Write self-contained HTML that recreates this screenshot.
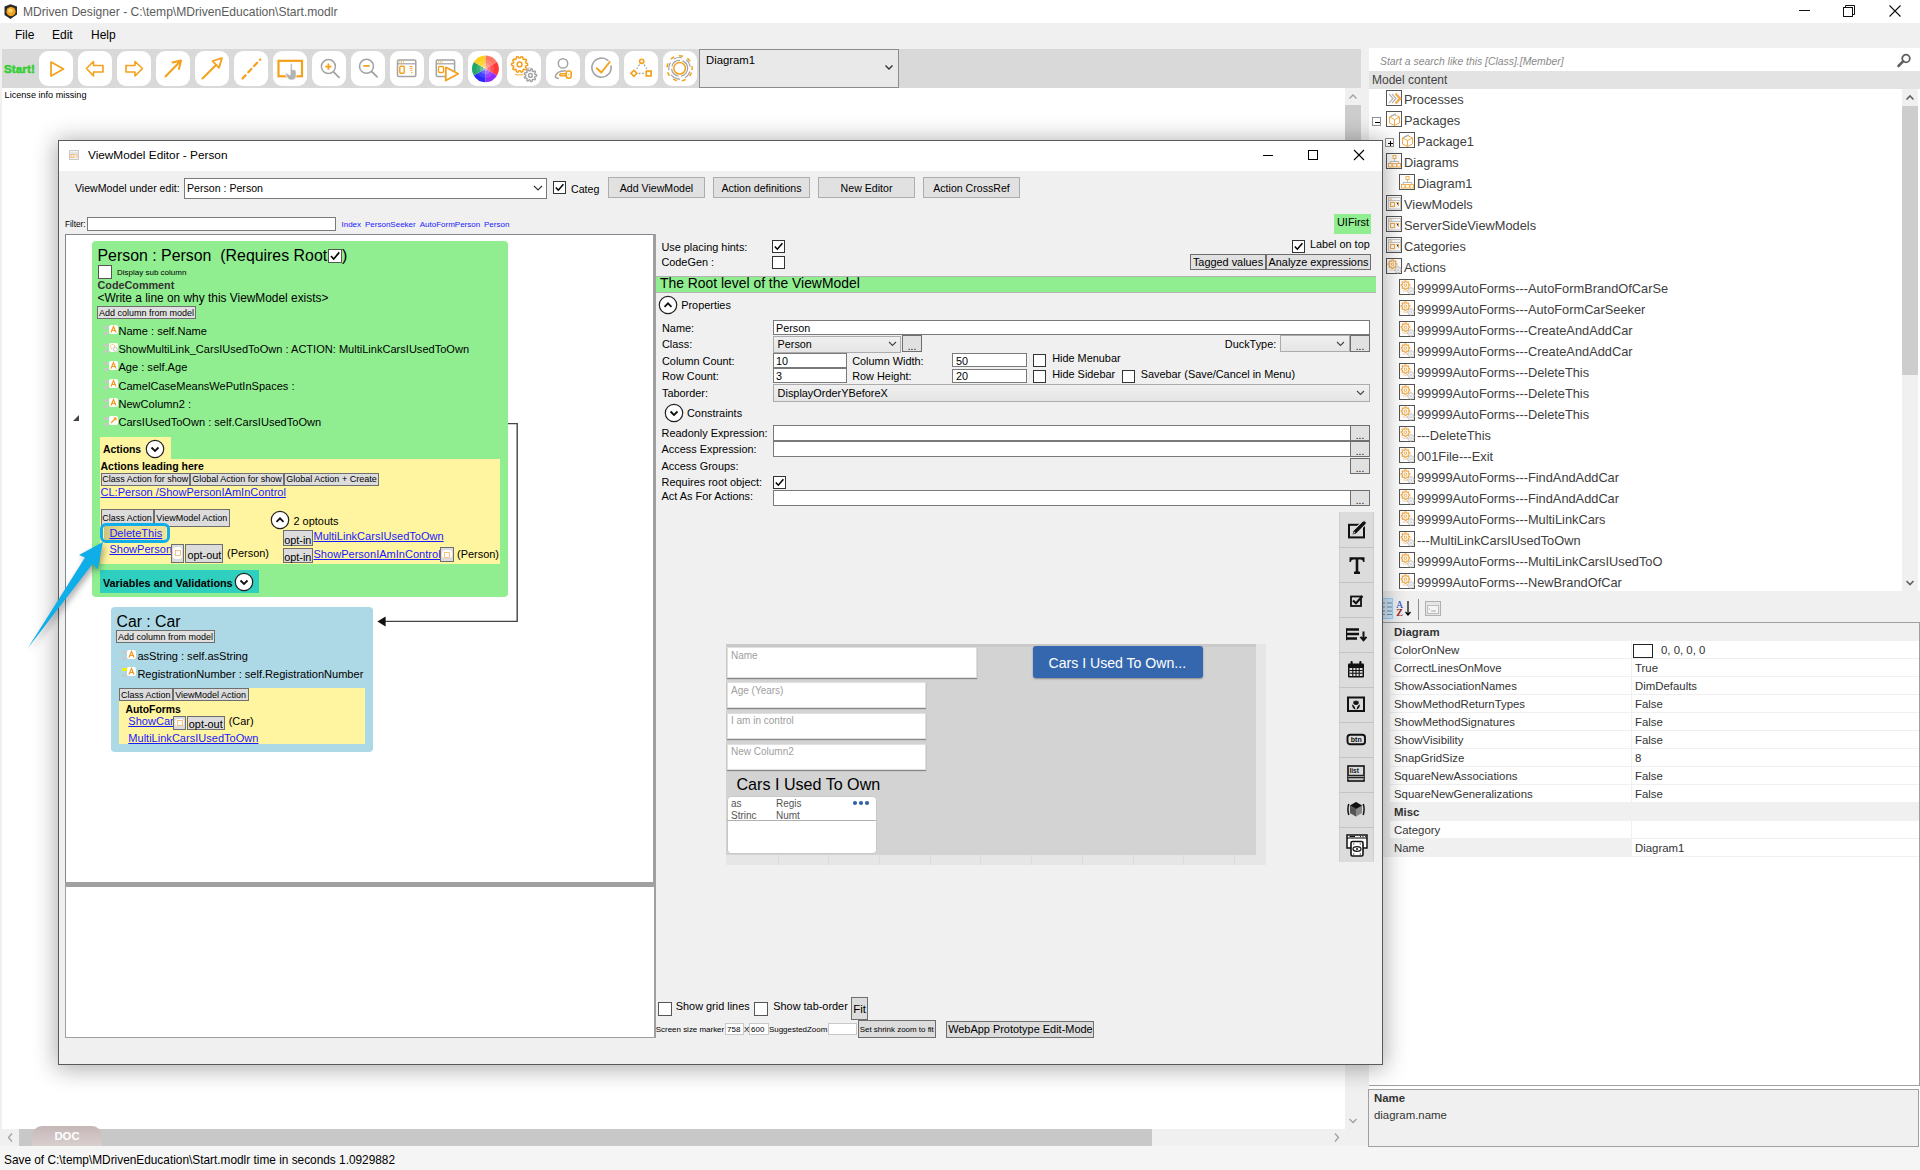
<!DOCTYPE html>
<html><head><meta charset="utf-8">
<style>
*{box-sizing:border-box;margin:0;padding:0}
html,body{width:1920px;height:1170px;overflow:hidden;background:#fff;font-family:"Liberation Sans",sans-serif;color:#000}
.a{position:absolute;white-space:nowrap}
.t11{font-size:11px}
.lnk{color:#0000ee;text-decoration:underline}
.btn{position:absolute;background:#e1e1e1;border:1px solid #adadad;font-size:11px;text-align:center}
.cb{position:absolute;width:13px;height:13px;border:1px solid #333;background:#fff}
.tb{position:absolute;top:51px;width:34px;height:35px;background:#fff;border-radius:9px}
.tb svg{position:absolute;left:0;top:0}
.ti{position:absolute;font-size:12.8px;color:#404040;white-space:nowrap}
.ico{position:absolute;width:17px;height:17px;border:1px solid #6e6e6e;background:#fff}
</style></head><body>
<!-- title bar -->
<div class="a" style="left:0;top:0;width:1920px;height:23px;background:#fff"></div>
<div class="a" style="left:23px;top:5px;font-size:12.1px;color:#5c5c5c">MDriven Designer - C:\temp\MDrivenEducation\Start.modlr</div>
<!-- app icon -->
<svg class="a" style="left:2px;top:3px" width="17" height="17"><path d="M2.5,3.5 L8.5,1.2 L15,3.5 L15,11.5 L8.5,16 L2.5,12 Z" fill="#2b2b2b"/><circle cx="9" cy="8.6" r="4.6" fill="#f4a21c"/><circle cx="8.4" cy="7.6" r="2.2" fill="#ffd36b"/></svg>
<!-- window controls -->
<div class="a" style="left:1799px;top:10px;width:11px;height:1px;background:#111"></div>
<svg class="a" style="left:1842px;top:4px" width="14" height="14"><path d="M3.5,3.5 V1.5 H12.5 V10.5 H10.5" fill="none" stroke="#111" stroke-width="1"/><rect x="1.5" y="3.5" width="9" height="9" fill="#fff" stroke="#111" stroke-width="1"/></svg>
<svg class="a" style="left:1888px;top:4px" width="14" height="14"><path d="M1.5,1.5 L12.5,12.5 M12.5,1.5 L1.5,12.5" stroke="#111" stroke-width="1.1"/></svg>
<!-- menu -->
<div class="a" style="left:0;top:23px;width:1920px;height:26px;background:#f0f0f0"></div>
<div class="a" style="left:15px;top:28px;font-size:12px">File</div>
<div class="a" style="left:52px;top:28px;font-size:12px">Edit</div>
<div class="a" style="left:91px;top:28px;font-size:12px">Help</div>
<!-- toolbar -->
<div class="a" style="left:0;top:49px;width:2px;height:1097px;background:#f0f0f0"></div>
<div class="a" style="left:2px;top:49px;width:1359px;height:39px;background:#d9d9d9"></div>
<div class="a" style="left:1361px;top:49px;width:8px;height:1098px;background:#f0f0f0"></div>
<div class="a" style="left:4px;top:62.5px;font-size:11.6px;line-height:11.6px;font-weight:bold;letter-spacing:0.1px;-webkit-text-stroke:0.6px #34cf34;color:#34cf34">Start!</div>
<div class="tb" style="left:39px"><svg width="34" height="35" viewBox="0 0 34 35"><polygon points="12,11 24.5,18 12,25" fill="none" stroke="#f5a01a" stroke-width="1.7" stroke-linejoin="round"/></svg></div>
<div class="tb" style="left:78px"><svg width="34" height="35" viewBox="0 0 34 35"><path d="M8.5,17.5 L15.5,10.5 V14.5 H25 V21 H15.5 V25 Z" fill="none" stroke="#f5a01a" stroke-width="1.6" stroke-linejoin="round"/></svg></div>
<div class="tb" style="left:117px"><svg width="34" height="35" viewBox="0 0 34 35"><path d="M25.5,17.5 L18,10.5 V14.5 H9 V21 H18 V25 Z" fill="none" stroke="#f5a01a" stroke-width="1.6" stroke-linejoin="round"/></svg></div>
<div class="tb" style="left:156px"><svg width="34" height="35" viewBox="0 0 34 35"><path d="M9.5,25.5 L25,9.5 M16.5,11.5 L25,9.5 L23,18" fill="none" stroke="#f5a01a" stroke-width="2" stroke-linecap="round" stroke-linejoin="round"/></svg></div>
<div class="tb" style="left:195px"><svg width="34" height="35" viewBox="0 0 34 35"><path d="M7.5,27.5 L21,14" fill="none" stroke="#f5a01a" stroke-width="2" stroke-linecap="round"/><path d="M27,7 L17.5,10 L24,16.8 Z" fill="none" stroke="#f5a01a" stroke-width="1.8" stroke-linejoin="round"/></svg></div>
<div class="tb" style="left:234px"><svg width="34" height="35" viewBox="0 0 34 35"><path d="M8.5,27.5 L26.2,8.5" fill="none" stroke="#f5a01a" stroke-width="2.2" stroke-linecap="round" stroke-dasharray="4.5,4"/></svg></div>
<div class="tb" style="left:273px"><svg width="34" height="35" viewBox="0 0 34 35"><rect x="5.5" y="9.8" width="23.5" height="15.5" fill="none" stroke="#f5a01a" stroke-width="2.2"/><path d="M17.2,13 q1,-1.6 2,0 v5.5 l2.5,0.3 q1.5,0.5 1.5,2 v3.5 q0,4.5 -4,4.8 h-1.5 q-2.2,-0.2 -3.2,-2.2 l-2.2,-3.8 q-0.3,-1.2 1,-1 l3.9,2 z" fill="#b3b3b3" stroke="#fff" stroke-width="0.8"/></svg></div>
<div class="tb" style="left:312px"><svg width="34" height="35" viewBox="0 0 34 35"><circle cx="16.4" cy="15.6" r="7" fill="none" stroke="#a3a3a3" stroke-width="1.5"/><path d="M21.5,20.8 L27,26.3" stroke="#a3a3a3" stroke-width="1.8" stroke-linecap="round"/><path d="M13.3,15.6 H19.5 M16.4,12.5 V18.7" stroke="#f5a01a" stroke-width="1.8"/></svg></div>
<div class="tb" style="left:351px"><svg width="34" height="35" viewBox="0 0 34 35"><circle cx="15.5" cy="15.3" r="7" fill="none" stroke="#a3a3a3" stroke-width="1.5"/><path d="M20.6,20.5 L26.2,25.8" stroke="#a3a3a3" stroke-width="1.8" stroke-linecap="round"/><path d="M12.4,14.9 H18.6" stroke="#f5a01a" stroke-width="1.8"/></svg></div>
<div class="tb" style="left:390px"><svg width="34" height="35" viewBox="0 0 34 35"><rect x="7.5" y="9" width="18.3" height="16.4" rx="1.2" fill="none" stroke="#a3a3a3" stroke-width="1.5"/><path d="M7.5,12.8 H25.8" stroke="#a3a3a3" stroke-width="1.2"/><circle cx="9.8" cy="10.9" r=".6" fill="#f5a01a"/><circle cx="11.6" cy="10.9" r=".6" fill="#f5a01a"/><circle cx="13.4" cy="10.9" r=".6" fill="#f5a01a"/><rect x="9.8" y="15.3" width="4.4" height="7" rx="1" fill="none" stroke="#f5a01a" stroke-width="1.4"/><path d="M19.5,15.5 H22.5 M19.5,17.3 H22.5 M20.5,19.3 H22.5 M21,21.6 H22.5" stroke="#f5a01a" stroke-width="1"/></svg></div>
<div class="tb" style="left:429px"><svg width="34" height="35" viewBox="0 0 34 35"><rect x="7.3" y="9" width="18.3" height="16.4" rx="1.2" fill="none" stroke="#a3a3a3" stroke-width="1.5"/><path d="M7.3,12.8 H25.6" stroke="#a3a3a3" stroke-width="1.2"/><circle cx="9.6" cy="10.9" r=".6" fill="#f5a01a"/><circle cx="11.4" cy="10.9" r=".6" fill="#f5a01a"/><circle cx="13.2" cy="10.9" r=".6" fill="#f5a01a"/><rect x="9.5" y="15.5" width="5" height="6" rx="1" fill="none" stroke="#f5a01a" stroke-width="1.3"/><path d="M16.8,16.3 L29.2,22.8 L16.8,29.5 Z" fill="#fff" stroke="#f5a01a" stroke-width="1.8" stroke-linejoin="round"/></svg></div>
<div class="tb" style="left:468px"><svg width="34" height="35" viewBox="0 0 34 35"><path d="M17.4,17.8 L17.40,4.40 A13.4,13.4 0 0 1 29.00,11.10 Z" fill="#ff7564"/><path d="M17.4,17.8 L29.00,11.10 A13.4,13.4 0 0 1 29.00,24.50 Z" fill="#ff3a3a"/><path d="M17.4,17.8 L29.00,24.50 A13.4,13.4 0 0 1 17.40,31.20 Z" fill="#8f2bff"/><path d="M17.4,17.8 L17.40,31.20 A13.4,13.4 0 0 1 5.80,24.50 Z" fill="#2a2aff"/><path d="M17.4,17.8 L5.80,24.50 A13.4,13.4 0 0 1 5.80,11.10 Z" fill="#1fa86a"/><path d="M17.4,17.8 L5.80,11.10 A13.4,13.4 0 0 1 17.40,4.40 Z" fill="#ffcf1f"/><circle cx="17.4" cy="17.8" r="9" fill="#fff" opacity=".12"/><circle cx="17.4" cy="17.8" r="5.5" fill="#fff" opacity=".2"/><circle cx="17.4" cy="17.8" r="2.5" fill="#fff" opacity=".25"/></svg></div>
<div class="tb" style="left:507px"><svg width="34" height="35" viewBox="0 0 34 35"><path d="M20.60,13.40 L20.59,13.71 L20.58,14.03 L20.42,14.33 L19.71,14.53 L19.00,14.67 L18.82,14.89 L18.76,15.14 L18.69,15.38 L18.60,15.62 L18.51,15.85 L18.53,16.13 L19.02,16.67 L19.47,17.25 L19.42,17.58 L19.25,17.84 L19.07,18.10 L18.88,18.35 L18.68,18.60 L18.38,18.74 L17.69,18.49 L17.03,18.19 L16.76,18.27 L16.56,18.43 L16.36,18.58 L16.16,18.72 L15.94,18.86 L15.79,19.09 L15.87,19.82 L15.90,20.55 L15.66,20.79 L15.37,20.91 L15.07,21.01 L14.77,21.10 L14.47,21.18 L14.14,21.12 L13.73,20.51 L13.37,19.88 L13.10,19.78 L12.85,19.80 L12.60,19.80 L12.35,19.80 L12.10,19.78 L11.83,19.88 L11.47,20.51 L11.06,21.12 L10.73,21.18 L10.43,21.10 L10.13,21.01 L9.83,20.91 L9.54,20.79 L9.30,20.55 L9.33,19.82 L9.41,19.09 L9.26,18.86 L9.04,18.72 L8.84,18.58 L8.64,18.43 L8.44,18.27 L8.17,18.19 L7.51,18.49 L6.82,18.74 L6.52,18.60 L6.32,18.35 L6.13,18.10 L5.95,17.84 L5.78,17.58 L5.73,17.25 L6.18,16.67 L6.67,16.13 L6.69,15.85 L6.60,15.62 L6.51,15.38 L6.44,15.14 L6.38,14.89 L6.20,14.67 L5.49,14.53 L4.78,14.33 L4.62,14.03 L4.61,13.71 L4.60,13.40 L4.61,13.09 L4.62,12.77 L4.78,12.47 L5.49,12.27 L6.20,12.13 L6.38,11.91 L6.44,11.66 L6.51,11.42 L6.60,11.18 L6.69,10.95 L6.67,10.67 L6.18,10.13 L5.73,9.55 L5.78,9.22 L5.95,8.96 L6.13,8.70 L6.32,8.45 L6.52,8.20 L6.82,8.06 L7.51,8.31 L8.17,8.61 L8.44,8.53 L8.64,8.37 L8.84,8.22 L9.04,8.08 L9.26,7.94 L9.41,7.71 L9.33,6.98 L9.30,6.25 L9.54,6.01 L9.83,5.89 L10.13,5.79 L10.43,5.70 L10.73,5.62 L11.06,5.68 L11.47,6.29 L11.83,6.92 L12.10,7.02 L12.35,7.00 L12.60,7.00 L12.85,7.00 L13.10,7.02 L13.37,6.92 L13.73,6.29 L14.14,5.68 L14.47,5.62 L14.77,5.70 L15.07,5.79 L15.37,5.89 L15.66,6.01 L15.90,6.25 L15.87,6.98 L15.79,7.71 L15.94,7.94 L16.16,8.08 L16.36,8.22 L16.56,8.37 L16.76,8.53 L17.03,8.61 L17.69,8.31 L18.38,8.06 L18.68,8.20 L18.88,8.45 L19.07,8.70 L19.25,8.96 L19.42,9.22 L19.47,9.55 L19.02,10.13 L18.53,10.67 L18.51,10.95 L18.60,11.18 L18.69,11.42 L18.76,11.66 L18.82,11.91 L19.00,12.13 L19.71,12.27 L20.42,12.47 L20.58,12.77 L20.59,13.09 L20.60,13.40Z" fill="none" stroke="#f5a01a" stroke-width="1.5" stroke-linejoin="round"/><circle cx="12.6" cy="13.4" r="2.40" fill="none" stroke="#f5a01a" stroke-width="1.5"/><path d="M8.2,23.4 q4,1.2 8,0" fill="none" stroke="#f5a01a" stroke-width="1.1" opacity=".75"/><path d="M20,17.5 q3,-1.3 6,.5" fill="none" stroke="#a3a3a3" stroke-width="0.9" opacity=".7"/><path d="M29.60,24.40 L29.60,24.64 L29.58,24.89 L29.56,25.13 L29.01,25.29 L28.36,25.39 L27.87,25.47 L27.83,25.65 L27.77,25.82 L27.72,25.99 L27.65,26.16 L27.58,26.33 L27.50,26.49 L27.93,26.94 L28.35,27.44 L28.56,27.84 L28.42,28.04 L28.27,28.24 L28.11,28.43 L27.95,28.61 L27.78,28.78 L27.57,28.91 L27.00,28.61 L26.45,28.27 L26.10,28.12 L25.96,28.22 L25.80,28.32 L25.65,28.41 L25.49,28.50 L25.33,28.58 L25.21,28.77 L25.25,29.40 L25.24,30.05 L25.08,30.37 L24.85,30.43 L24.61,30.48 L24.37,30.52 L24.13,30.56 L23.89,30.58 L23.64,30.40 L23.40,29.80 L23.21,29.19 L23.04,28.99 L22.86,28.97 L22.68,28.94 L22.50,28.91 L22.33,28.87 L22.15,28.83 L21.90,29.02 L21.51,29.53 L21.08,30.01 L20.80,30.03 L20.59,29.92 L20.37,29.81 L20.16,29.69 L19.96,29.56 L19.76,29.42 L19.76,29.02 L19.98,28.40 L20.23,27.82 L20.15,27.65 L20.02,27.52 L19.90,27.39 L19.79,27.25 L19.68,27.10 L19.58,26.96 L19.15,27.01 L18.51,27.14 L17.88,27.21 L17.77,27.00 L17.67,26.77 L17.58,26.55 L17.50,26.32 L17.43,26.08 L17.37,25.85 L17.77,25.52 L18.34,25.20 L18.83,24.94 L18.81,24.76 L18.80,24.58 L18.80,24.40 L18.80,24.22 L18.81,24.04 L18.83,23.86 L18.34,23.60 L17.77,23.28 L17.37,22.95 L17.43,22.72 L17.50,22.48 L17.58,22.25 L17.67,22.03 L17.77,21.80 L17.88,21.59 L18.51,21.66 L19.15,21.79 L19.58,21.84 L19.68,21.70 L19.79,21.55 L19.90,21.41 L20.02,21.28 L20.15,21.15 L20.23,20.98 L19.98,20.40 L19.76,19.78 L19.76,19.38 L19.96,19.24 L20.16,19.11 L20.37,18.99 L20.59,18.88 L20.80,18.77 L21.08,18.79 L21.51,19.27 L21.90,19.78 L22.15,19.97 L22.33,19.93 L22.50,19.89 L22.68,19.86 L22.86,19.83 L23.04,19.81 L23.21,19.61 L23.40,19.00 L23.64,18.40 L23.89,18.22 L24.13,18.24 L24.37,18.28 L24.61,18.32 L24.85,18.37 L25.08,18.43 L25.24,18.75 L25.25,19.40 L25.21,20.03 L25.33,20.22 L25.49,20.30 L25.65,20.39 L25.80,20.48 L25.96,20.58 L26.10,20.68 L26.45,20.53 L27.00,20.19 L27.57,19.89 L27.78,20.02 L27.95,20.19 L28.11,20.37 L28.27,20.56 L28.42,20.76 L28.56,20.96 L28.35,21.36 L27.93,21.86 L27.50,22.31 L27.58,22.47 L27.65,22.64 L27.72,22.81 L27.77,22.98 L27.83,23.15 L27.87,23.33 L28.36,23.41 L29.01,23.51 L29.56,23.67 L29.58,23.91 L29.60,24.16 L29.60,24.40Z" fill="none" stroke="#a3a3a3" stroke-width="1.4" stroke-linejoin="round"/><circle cx="23.4" cy="24.4" r="1.86" fill="none" stroke="#a3a3a3" stroke-width="1.4"/></svg></div>
<div class="tb" style="left:546px"><svg width="34" height="35" viewBox="0 0 34 35"><circle cx="17" cy="12.4" r="4.7" fill="none" stroke="#a3a3a3" stroke-width="1.5"/><path d="M19.5,19.8 Q10.5,20 9.3,25.5 Q9.3,27.2 12.3,27.2" fill="none" stroke="#a3a3a3" stroke-width="1.5" stroke-linecap="round"/><path d="M20.5,22.8 H14.5 Q12.8,23.8 14.5,24.8 H20.5" fill="none" stroke="#f5a01a" stroke-width="1.5" stroke-linecap="round"/><rect x="20.2" y="20" width="5" height="7.3" rx="2.2" fill="none" stroke="#f5a01a" stroke-width="1.6"/><circle cx="22.8" cy="23.6" r=".7" fill="#f5a01a"/></svg></div>
<div class="tb" style="left:585px"><svg width="34" height="35" viewBox="0 0 34 35"><path d="M23,9.5 A9.6,9.6 0 1 0 26,15" fill="none" stroke="#a3a3a3" stroke-width="1.6" stroke-linecap="round"/><path d="M11.7,17.2 L16.4,21.5 L24.7,11" fill="none" stroke="#f5a01a" stroke-width="1.9" stroke-linecap="round" stroke-linejoin="round"/></svg></div>
<div class="tb" style="left:624px"><svg width="34" height="35" viewBox="0 0 34 35"><circle cx="17.7" cy="10.3" r="2.1" fill="none" stroke="#f5a01a" stroke-width="1.6"/><rect x="7.8" y="20.2" width="4.2" height="4.2" transform="rotate(45 9.9 22.3)" fill="none" stroke="#f5a01a" stroke-width="1.6"/><rect x="22.3" y="20.1" width="4.8" height="4.8" fill="none" stroke="#f5a01a" stroke-width="1.7"/><path d="M15.5,13.5 L12.7,17.8 M20,13.5 L22.8,17.8 M14.5,22.4 H19.8" stroke="#a3a3a3" stroke-width="1.3" stroke-dasharray="2,1.6"/></svg></div>
<div class="tb" style="left:663px"><svg width="34" height="35" viewBox="0 0 34 35"><circle cx="16.6" cy="17.3" r="5.8" fill="none" stroke="#f5a01a" stroke-width="1.5"/><circle cx="16.6" cy="17.3" r="8" fill="none" stroke="#a3a3a3" stroke-width="1.2" stroke-dasharray="11,2.5"/><circle cx="16.6" cy="17.3" r="10.8" fill="none" stroke="#a3a3a3" stroke-width="1.2" stroke-dasharray="8,5" transform="rotate(100 16.6 17.3)"/><circle cx="16.6" cy="17.3" r="12.6" fill="none" stroke="#f5a01a" stroke-width="1.5" stroke-dasharray="4,5" transform="rotate(20 16.6 17.3)"/></svg></div>

<div class="a" style="left:699px;top:49px;width:200px;height:39px;background:#e9e9e9;border:1px solid #8c8c8c"></div>
<div class="a" style="left:706px;top:55px;font-size:11.3px;line-height:11.3px">Diagram1</div>
<svg class="a" style="left:884px;top:64px" width="10" height="7"><path d="M1.5,1.5 L5,5 L8.5,1.5" fill="none" stroke="#333" stroke-width="1.4"/></svg>


<!-- main white area -->
<div class="a" style="left:4.6px;top:91px;font-size:9.1px;line-height:9.2px">License info missing</div>
<!-- vertical scrollbar main -->
<div class="a" style="left:1345px;top:88px;width:16px;height:1041px;background:#f0f0f0"></div>
<div class="a" style="left:1345px;top:105px;width:16px;height:940px;background:#cdcdcd"></div>
<!-- horizontal scrollbar -->
<div class="a" style="left:2px;top:1129px;width:1359px;height:17px;background:#f0f0f0"></div>
<div class="a" style="left:19px;top:1129px;width:1133px;height:17px;background:#c8c8c8"></div>
<div class="a" style="left:32px;top:1126px;width:70px;height:20px;border-radius:10px 10px 0 0;background:linear-gradient(#c6b7b7,#d9cfcf);color:#fff;font-weight:bold;font-size:11.3px;text-align:center;line-height:21px">DOC</div>
<!-- status -->
<div class="a" style="left:0;top:1146px;width:1920px;height:24px;background:#f5f5f5"></div>
<div class="a" style="left:4px;top:1153px;font-size:11.85px">Save of C:\temp\MDrivenEducation\Start.modlr time in seconds 1.0929882</div>
<!-- right panel -->
<div class="a" style="left:1369px;top:48px;width:551px;height:23px;background:#fff"></div>
<div class="a" style="left:1380px;top:55.5px;font-size:10.4px;font-style:italic;color:#8a8a8a">Start a search like this [Class].[Member]</div>
<div class="a" style="left:1369px;top:71px;width:551px;height:18px;background:#e3e3e3"></div>
<div class="a" style="left:1372px;top:73px;font-size:12px;color:#444">Model content</div>
<!-- main scroll arrows -->
<svg class="a" style="left:1345px;top:88px" width="16" height="17"><path d="M4.5,10.5 L8,7 L11.5,10.5" fill="none" stroke="#a0a0a0" stroke-width="1.3"/></svg>
<svg class="a" style="left:1345px;top:1112px" width="16" height="17"><path d="M4.5,7 L8,10.5 L11.5,7" fill="none" stroke="#a0a0a0" stroke-width="1.3"/></svg>
<svg class="a" style="left:2px;top:1129px" width="17" height="17"><path d="M10,4.5 L6.5,8.5 L10,12.5" fill="none" stroke="#a0a0a0" stroke-width="1.3"/></svg>
<svg class="a" style="left:1328px;top:1129px" width="17" height="17"><path d="M7,4.5 L10.5,8.5 L7,12.5" fill="none" stroke="#a0a0a0" stroke-width="1.3"/></svg>
<div class="a" style="left:1369px;top:89px;width:533px;height:502px;background:#fff;overflow:hidden">
<div class="ico" style="left:17px;top:1px;width:16px;height:16px;border-color:#555"><svg width="15" height="15" viewBox="0 0 15 15" style="position:absolute;left:0;top:0"><path d="M2,3 L6,7.5 L2,12 M5,3 L9,7.5 L5,12" fill="none" stroke="#b5b5b5" stroke-width="1.2"/><path d="M8.5,2.5 L13,7.5 L8.5,12.5" fill="none" stroke="#f3ac4a" stroke-width="2.4"/></svg></div><div class="ti" style="left:35px;top:3px">Processes</div>
<div class="ico" style="left:17px;top:22px;width:16px;height:16px;border-color:#555"><svg width="15" height="15" viewBox="0 0 15 15" style="position:absolute;left:0;top:0"><path d="M2.5,5 L7.5,2.5 L12.5,5 V11 L7.5,13.5 L2.5,11 Z M2.5,5 L7.5,7.5 L12.5,5 M7.5,7.5 V13.5" fill="none" stroke="#f3ac4a" stroke-width="1"/><path d="M4,4.2 L9,1.9" stroke="#b5b5b5" stroke-width="1.5"/></svg></div><div class="ti" style="left:35px;top:24px">Packages</div><div style="position:absolute;left:3px;top:28px;width:9px;height:9px;border:1px solid #919191;background:#fff"><div style="position:absolute;left:2px;top:3.5px;width:5px;height:1px;background:#000"></div></div>
<div class="ico" style="left:30px;top:43px;width:16px;height:16px;border-color:#555"><svg width="15" height="15" viewBox="0 0 15 15" style="position:absolute;left:0;top:0"><path d="M2.5,5 L7.5,2.5 L12.5,5 V11 L7.5,13.5 L2.5,11 Z M2.5,5 L7.5,7.5 L12.5,5 M7.5,7.5 V13.5" fill="none" stroke="#f3ac4a" stroke-width="1"/><path d="M4,4.2 L9,1.9" stroke="#b5b5b5" stroke-width="1.5"/></svg></div><div class="ti" style="left:48px;top:45px">Package1</div><div style="position:absolute;left:16px;top:49px;width:9px;height:9px;border:1px solid #919191;background:#fff"><div style="position:absolute;left:2px;top:3.5px;width:5px;height:1px;background:#000"></div><div style="position:absolute;left:4px;top:1.5px;width:1px;height:5px;background:#000"></div></div>
<div class="ico" style="left:17px;top:64px;width:16px;height:16px;border-color:#555"><svg width="15" height="15" viewBox="0 0 15 15" style="position:absolute;left:0;top:0"><rect x="6" y="1.5" width="3" height="3" fill="none" stroke="#f3ac4a" stroke-width=".9"/><path d="M7.5,4.5 V7 M3.2,9.5 V7.5 H11.8 V9.5" fill="none" stroke="#b5b5b5" stroke-width=".9"/><rect x="1.5" y="9.5" width="3.5" height="3.5" fill="none" stroke="#f3ac4a" stroke-width=".9"/><rect x="5.8" y="9.5" width="3.5" height="3.5" fill="none" stroke="#f3ac4a" stroke-width=".9"/><rect x="10" y="9.5" width="3.5" height="3.5" fill="none" stroke="#f3ac4a" stroke-width=".9"/></svg></div><div class="ti" style="left:35px;top:66px">Diagrams</div>
<div class="ico" style="left:30px;top:85px;width:16px;height:16px;border-color:#555"><svg width="15" height="15" viewBox="0 0 15 15" style="position:absolute;left:0;top:0"><rect x="6" y="1.5" width="3" height="3" fill="none" stroke="#f3ac4a" stroke-width=".9"/><path d="M7.5,4.5 V7 M3.2,9.5 V7.5 H11.8 V9.5" fill="none" stroke="#b5b5b5" stroke-width=".9"/><rect x="1.5" y="9.5" width="3.5" height="3.5" fill="none" stroke="#f3ac4a" stroke-width=".9"/><rect x="5.8" y="9.5" width="3.5" height="3.5" fill="none" stroke="#f3ac4a" stroke-width=".9"/><rect x="10" y="9.5" width="3.5" height="3.5" fill="none" stroke="#f3ac4a" stroke-width=".9"/></svg></div><div class="ti" style="left:48px;top:87px">Diagram1</div>
<div class="ico" style="left:17px;top:106px;width:16px;height:16px;border-color:#555"><svg width="15" height="15" viewBox="0 0 15 15" style="position:absolute;left:0;top:0"><rect x="1.5" y="1.5" width="12" height="11.5" fill="none" stroke="#ccc" stroke-width="1"/><path d="M1.5,4.5 H13.5" stroke="#ccc"/><rect x="3.5" y="6.5" width="4" height="4" fill="none" stroke="#f3ac4a" stroke-width="1.1"/><path d="M9.5,6.5 H11.5 V10" stroke="#f3ac4a" stroke-width="1"/><path d="M2.5,3 H5" stroke="#f3ac4a" stroke-width=".8"/></svg></div><div class="ti" style="left:35px;top:108px">ViewModels</div>
<div class="ico" style="left:17px;top:127px;width:16px;height:16px;border-color:#555"><svg width="15" height="15" viewBox="0 0 15 15" style="position:absolute;left:0;top:0"><rect x="1.5" y="1.5" width="12" height="11.5" fill="none" stroke="#ccc" stroke-width="1"/><path d="M1.5,4.5 H13.5" stroke="#ccc"/><rect x="3.5" y="6.5" width="4" height="4" fill="none" stroke="#f3ac4a" stroke-width="1.1"/><path d="M9.5,6.5 H11.5 V10" stroke="#f3ac4a" stroke-width="1"/><path d="M2.5,3 H5" stroke="#f3ac4a" stroke-width=".8"/></svg></div><div class="ti" style="left:35px;top:129px">ServerSideViewModels</div>
<div class="ico" style="left:17px;top:148px;width:16px;height:16px;border-color:#555"><svg width="15" height="15" viewBox="0 0 15 15" style="position:absolute;left:0;top:0"><rect x="1.5" y="1.5" width="12" height="11.5" fill="none" stroke="#ccc" stroke-width="1"/><path d="M1.5,4.5 H13.5" stroke="#ccc"/><rect x="3.5" y="6.5" width="4" height="4" fill="none" stroke="#f3ac4a" stroke-width="1.1"/><path d="M9.5,6.5 H11.5 V10" stroke="#f3ac4a" stroke-width="1"/><path d="M2.5,3 H5" stroke="#f3ac4a" stroke-width=".8"/></svg></div><div class="ti" style="left:35px;top:150px">Categories</div>
<div class="ico" style="left:17px;top:169px;width:16px;height:16px;border-color:#555"><svg width="15" height="15" viewBox="0 0 15 15" style="position:absolute;left:0;top:0"><path d="M9.80,5.20 L9.79,5.43 L9.78,5.65 L9.57,5.85 L9.04,5.95 L8.59,6.03 L8.54,6.19 L8.49,6.35 L8.42,6.50 L8.35,6.65 L8.27,6.80 L8.54,7.17 L8.84,7.62 L8.84,7.91 L8.70,8.08 L8.54,8.24 L8.38,8.40 L8.21,8.54 L7.92,8.54 L7.47,8.24 L7.10,7.97 L6.95,8.05 L6.80,8.12 L6.65,8.19 L6.49,8.24 L6.33,8.29 L6.25,8.74 L6.15,9.27 L5.95,9.48 L5.73,9.49 L5.50,9.50 L5.27,9.49 L5.05,9.48 L4.85,9.27 L4.75,8.74 L4.67,8.29 L4.51,8.24 L4.35,8.19 L4.20,8.12 L4.05,8.05 L3.90,7.97 L3.53,8.24 L3.08,8.54 L2.79,8.54 L2.62,8.40 L2.46,8.24 L2.30,8.08 L2.16,7.91 L2.16,7.62 L2.46,7.17 L2.73,6.80 L2.65,6.65 L2.58,6.50 L2.51,6.35 L2.46,6.19 L2.41,6.03 L1.96,5.95 L1.43,5.85 L1.22,5.65 L1.21,5.43 L1.20,5.20 L1.21,4.97 L1.22,4.75 L1.43,4.55 L1.96,4.45 L2.41,4.37 L2.46,4.21 L2.51,4.05 L2.58,3.90 L2.65,3.75 L2.73,3.60 L2.46,3.23 L2.16,2.78 L2.16,2.49 L2.30,2.32 L2.46,2.16 L2.62,2.00 L2.79,1.86 L3.08,1.86 L3.53,2.16 L3.90,2.43 L4.05,2.35 L4.20,2.28 L4.35,2.21 L4.51,2.16 L4.67,2.11 L4.75,1.66 L4.85,1.13 L5.05,0.92 L5.27,0.91 L5.50,0.90 L5.73,0.91 L5.95,0.92 L6.15,1.13 L6.25,1.66 L6.33,2.11 L6.49,2.16 L6.65,2.21 L6.80,2.28 L6.95,2.35 L7.10,2.43 L7.47,2.16 L7.92,1.86 L8.21,1.86 L8.38,2.00 L8.54,2.16 L8.70,2.32 L8.84,2.49 L8.84,2.78 L8.54,3.23 L8.27,3.60 L8.35,3.75 L8.42,3.90 L8.49,4.05 L8.54,4.21 L8.59,4.37 L9.04,4.45 L9.57,4.55 L9.78,4.75 L9.79,4.97 L9.80,5.20Z" fill="none" stroke="#f3ac4a" stroke-width="1.1"/><circle cx="5.5" cy="5.2" r="1.3" fill="none" stroke="#f3ac4a" stroke-width="1"/><path d="M2.8,10.8 q2.7,.9 5.4,0" stroke="#f3ac4a" stroke-width=".8" fill="none" opacity=".7"/><path d="M14.20,10.80 L14.20,10.98 L14.18,11.16 L14.02,11.31 L13.58,11.39 L13.21,11.45 L13.18,11.57 L13.13,11.70 L13.08,11.82 L13.03,11.93 L12.97,12.05 L13.19,12.35 L13.43,12.71 L13.44,12.94 L13.33,13.08 L13.20,13.20 L13.08,13.33 L12.94,13.44 L12.71,13.43 L12.35,13.19 L12.05,12.97 L11.93,13.03 L11.82,13.08 L11.70,13.13 L11.57,13.18 L11.45,13.21 L11.39,13.58 L11.31,14.02 L11.16,14.18 L10.98,14.20 L10.80,14.20 L10.62,14.20 L10.44,14.18 L10.29,14.02 L10.21,13.58 L10.15,13.21 L10.03,13.18 L9.90,13.13 L9.78,13.08 L9.67,13.03 L9.55,12.97 L9.25,13.19 L8.89,13.43 L8.66,13.44 L8.52,13.33 L8.40,13.20 L8.27,13.08 L8.16,12.94 L8.17,12.71 L8.41,12.35 L8.63,12.05 L8.57,11.93 L8.52,11.82 L8.47,11.70 L8.42,11.57 L8.39,11.45 L8.02,11.39 L7.58,11.31 L7.42,11.16 L7.40,10.98 L7.40,10.80 L7.40,10.62 L7.42,10.44 L7.58,10.29 L8.02,10.21 L8.39,10.15 L8.42,10.03 L8.47,9.90 L8.52,9.78 L8.57,9.67 L8.63,9.55 L8.41,9.25 L8.17,8.89 L8.16,8.66 L8.27,8.52 L8.40,8.40 L8.52,8.27 L8.66,8.16 L8.89,8.17 L9.25,8.41 L9.55,8.63 L9.67,8.57 L9.78,8.52 L9.90,8.47 L10.03,8.42 L10.15,8.39 L10.21,8.02 L10.29,7.58 L10.44,7.42 L10.62,7.40 L10.80,7.40 L10.98,7.40 L11.16,7.42 L11.31,7.58 L11.39,8.02 L11.45,8.39 L11.57,8.42 L11.70,8.47 L11.82,8.52 L11.93,8.57 L12.05,8.63 L12.35,8.41 L12.71,8.17 L12.94,8.16 L13.08,8.27 L13.20,8.40 L13.33,8.52 L13.44,8.66 L13.43,8.89 L13.19,9.25 L12.97,9.55 L13.03,9.67 L13.08,9.78 L13.13,9.90 L13.18,10.03 L13.21,10.15 L13.58,10.21 L14.02,10.29 L14.18,10.44 L14.20,10.62 L14.20,10.80Z" fill="none" stroke="#c4c4c4" stroke-width="1"/><circle cx="10.8" cy="10.8" r="1" fill="none" stroke="#c4c4c4" stroke-width=".8"/></svg></div><div class="ti" style="left:35px;top:171px">Actions</div>
<div class="ico" style="left:30px;top:190px;width:16px;height:16px;border-color:#555"><svg width="15" height="15" viewBox="0 0 15 15" style="position:absolute;left:0;top:0"><path d="M9.80,5.20 L9.79,5.43 L9.78,5.65 L9.57,5.85 L9.04,5.95 L8.59,6.03 L8.54,6.19 L8.49,6.35 L8.42,6.50 L8.35,6.65 L8.27,6.80 L8.54,7.17 L8.84,7.62 L8.84,7.91 L8.70,8.08 L8.54,8.24 L8.38,8.40 L8.21,8.54 L7.92,8.54 L7.47,8.24 L7.10,7.97 L6.95,8.05 L6.80,8.12 L6.65,8.19 L6.49,8.24 L6.33,8.29 L6.25,8.74 L6.15,9.27 L5.95,9.48 L5.73,9.49 L5.50,9.50 L5.27,9.49 L5.05,9.48 L4.85,9.27 L4.75,8.74 L4.67,8.29 L4.51,8.24 L4.35,8.19 L4.20,8.12 L4.05,8.05 L3.90,7.97 L3.53,8.24 L3.08,8.54 L2.79,8.54 L2.62,8.40 L2.46,8.24 L2.30,8.08 L2.16,7.91 L2.16,7.62 L2.46,7.17 L2.73,6.80 L2.65,6.65 L2.58,6.50 L2.51,6.35 L2.46,6.19 L2.41,6.03 L1.96,5.95 L1.43,5.85 L1.22,5.65 L1.21,5.43 L1.20,5.20 L1.21,4.97 L1.22,4.75 L1.43,4.55 L1.96,4.45 L2.41,4.37 L2.46,4.21 L2.51,4.05 L2.58,3.90 L2.65,3.75 L2.73,3.60 L2.46,3.23 L2.16,2.78 L2.16,2.49 L2.30,2.32 L2.46,2.16 L2.62,2.00 L2.79,1.86 L3.08,1.86 L3.53,2.16 L3.90,2.43 L4.05,2.35 L4.20,2.28 L4.35,2.21 L4.51,2.16 L4.67,2.11 L4.75,1.66 L4.85,1.13 L5.05,0.92 L5.27,0.91 L5.50,0.90 L5.73,0.91 L5.95,0.92 L6.15,1.13 L6.25,1.66 L6.33,2.11 L6.49,2.16 L6.65,2.21 L6.80,2.28 L6.95,2.35 L7.10,2.43 L7.47,2.16 L7.92,1.86 L8.21,1.86 L8.38,2.00 L8.54,2.16 L8.70,2.32 L8.84,2.49 L8.84,2.78 L8.54,3.23 L8.27,3.60 L8.35,3.75 L8.42,3.90 L8.49,4.05 L8.54,4.21 L8.59,4.37 L9.04,4.45 L9.57,4.55 L9.78,4.75 L9.79,4.97 L9.80,5.20Z" fill="none" stroke="#f3ac4a" stroke-width="1.1"/><circle cx="5.5" cy="5.2" r="1.3" fill="none" stroke="#f3ac4a" stroke-width="1"/><path d="M2.8,10.8 q2.7,.9 5.4,0" stroke="#f3ac4a" stroke-width=".8" fill="none" opacity=".7"/><path d="M14.20,10.80 L14.20,10.98 L14.18,11.16 L14.02,11.31 L13.58,11.39 L13.21,11.45 L13.18,11.57 L13.13,11.70 L13.08,11.82 L13.03,11.93 L12.97,12.05 L13.19,12.35 L13.43,12.71 L13.44,12.94 L13.33,13.08 L13.20,13.20 L13.08,13.33 L12.94,13.44 L12.71,13.43 L12.35,13.19 L12.05,12.97 L11.93,13.03 L11.82,13.08 L11.70,13.13 L11.57,13.18 L11.45,13.21 L11.39,13.58 L11.31,14.02 L11.16,14.18 L10.98,14.20 L10.80,14.20 L10.62,14.20 L10.44,14.18 L10.29,14.02 L10.21,13.58 L10.15,13.21 L10.03,13.18 L9.90,13.13 L9.78,13.08 L9.67,13.03 L9.55,12.97 L9.25,13.19 L8.89,13.43 L8.66,13.44 L8.52,13.33 L8.40,13.20 L8.27,13.08 L8.16,12.94 L8.17,12.71 L8.41,12.35 L8.63,12.05 L8.57,11.93 L8.52,11.82 L8.47,11.70 L8.42,11.57 L8.39,11.45 L8.02,11.39 L7.58,11.31 L7.42,11.16 L7.40,10.98 L7.40,10.80 L7.40,10.62 L7.42,10.44 L7.58,10.29 L8.02,10.21 L8.39,10.15 L8.42,10.03 L8.47,9.90 L8.52,9.78 L8.57,9.67 L8.63,9.55 L8.41,9.25 L8.17,8.89 L8.16,8.66 L8.27,8.52 L8.40,8.40 L8.52,8.27 L8.66,8.16 L8.89,8.17 L9.25,8.41 L9.55,8.63 L9.67,8.57 L9.78,8.52 L9.90,8.47 L10.03,8.42 L10.15,8.39 L10.21,8.02 L10.29,7.58 L10.44,7.42 L10.62,7.40 L10.80,7.40 L10.98,7.40 L11.16,7.42 L11.31,7.58 L11.39,8.02 L11.45,8.39 L11.57,8.42 L11.70,8.47 L11.82,8.52 L11.93,8.57 L12.05,8.63 L12.35,8.41 L12.71,8.17 L12.94,8.16 L13.08,8.27 L13.20,8.40 L13.33,8.52 L13.44,8.66 L13.43,8.89 L13.19,9.25 L12.97,9.55 L13.03,9.67 L13.08,9.78 L13.13,9.90 L13.18,10.03 L13.21,10.15 L13.58,10.21 L14.02,10.29 L14.18,10.44 L14.20,10.62 L14.20,10.80Z" fill="none" stroke="#c4c4c4" stroke-width="1"/><circle cx="10.8" cy="10.8" r="1" fill="none" stroke="#c4c4c4" stroke-width=".8"/></svg></div><div class="ti" style="left:48px;top:192px">99999AutoForms---AutoFormBrandOfCarSe</div>
<div class="ico" style="left:30px;top:211px;width:16px;height:16px;border-color:#555"><svg width="15" height="15" viewBox="0 0 15 15" style="position:absolute;left:0;top:0"><path d="M9.80,5.20 L9.79,5.43 L9.78,5.65 L9.57,5.85 L9.04,5.95 L8.59,6.03 L8.54,6.19 L8.49,6.35 L8.42,6.50 L8.35,6.65 L8.27,6.80 L8.54,7.17 L8.84,7.62 L8.84,7.91 L8.70,8.08 L8.54,8.24 L8.38,8.40 L8.21,8.54 L7.92,8.54 L7.47,8.24 L7.10,7.97 L6.95,8.05 L6.80,8.12 L6.65,8.19 L6.49,8.24 L6.33,8.29 L6.25,8.74 L6.15,9.27 L5.95,9.48 L5.73,9.49 L5.50,9.50 L5.27,9.49 L5.05,9.48 L4.85,9.27 L4.75,8.74 L4.67,8.29 L4.51,8.24 L4.35,8.19 L4.20,8.12 L4.05,8.05 L3.90,7.97 L3.53,8.24 L3.08,8.54 L2.79,8.54 L2.62,8.40 L2.46,8.24 L2.30,8.08 L2.16,7.91 L2.16,7.62 L2.46,7.17 L2.73,6.80 L2.65,6.65 L2.58,6.50 L2.51,6.35 L2.46,6.19 L2.41,6.03 L1.96,5.95 L1.43,5.85 L1.22,5.65 L1.21,5.43 L1.20,5.20 L1.21,4.97 L1.22,4.75 L1.43,4.55 L1.96,4.45 L2.41,4.37 L2.46,4.21 L2.51,4.05 L2.58,3.90 L2.65,3.75 L2.73,3.60 L2.46,3.23 L2.16,2.78 L2.16,2.49 L2.30,2.32 L2.46,2.16 L2.62,2.00 L2.79,1.86 L3.08,1.86 L3.53,2.16 L3.90,2.43 L4.05,2.35 L4.20,2.28 L4.35,2.21 L4.51,2.16 L4.67,2.11 L4.75,1.66 L4.85,1.13 L5.05,0.92 L5.27,0.91 L5.50,0.90 L5.73,0.91 L5.95,0.92 L6.15,1.13 L6.25,1.66 L6.33,2.11 L6.49,2.16 L6.65,2.21 L6.80,2.28 L6.95,2.35 L7.10,2.43 L7.47,2.16 L7.92,1.86 L8.21,1.86 L8.38,2.00 L8.54,2.16 L8.70,2.32 L8.84,2.49 L8.84,2.78 L8.54,3.23 L8.27,3.60 L8.35,3.75 L8.42,3.90 L8.49,4.05 L8.54,4.21 L8.59,4.37 L9.04,4.45 L9.57,4.55 L9.78,4.75 L9.79,4.97 L9.80,5.20Z" fill="none" stroke="#f3ac4a" stroke-width="1.1"/><circle cx="5.5" cy="5.2" r="1.3" fill="none" stroke="#f3ac4a" stroke-width="1"/><path d="M2.8,10.8 q2.7,.9 5.4,0" stroke="#f3ac4a" stroke-width=".8" fill="none" opacity=".7"/><path d="M14.20,10.80 L14.20,10.98 L14.18,11.16 L14.02,11.31 L13.58,11.39 L13.21,11.45 L13.18,11.57 L13.13,11.70 L13.08,11.82 L13.03,11.93 L12.97,12.05 L13.19,12.35 L13.43,12.71 L13.44,12.94 L13.33,13.08 L13.20,13.20 L13.08,13.33 L12.94,13.44 L12.71,13.43 L12.35,13.19 L12.05,12.97 L11.93,13.03 L11.82,13.08 L11.70,13.13 L11.57,13.18 L11.45,13.21 L11.39,13.58 L11.31,14.02 L11.16,14.18 L10.98,14.20 L10.80,14.20 L10.62,14.20 L10.44,14.18 L10.29,14.02 L10.21,13.58 L10.15,13.21 L10.03,13.18 L9.90,13.13 L9.78,13.08 L9.67,13.03 L9.55,12.97 L9.25,13.19 L8.89,13.43 L8.66,13.44 L8.52,13.33 L8.40,13.20 L8.27,13.08 L8.16,12.94 L8.17,12.71 L8.41,12.35 L8.63,12.05 L8.57,11.93 L8.52,11.82 L8.47,11.70 L8.42,11.57 L8.39,11.45 L8.02,11.39 L7.58,11.31 L7.42,11.16 L7.40,10.98 L7.40,10.80 L7.40,10.62 L7.42,10.44 L7.58,10.29 L8.02,10.21 L8.39,10.15 L8.42,10.03 L8.47,9.90 L8.52,9.78 L8.57,9.67 L8.63,9.55 L8.41,9.25 L8.17,8.89 L8.16,8.66 L8.27,8.52 L8.40,8.40 L8.52,8.27 L8.66,8.16 L8.89,8.17 L9.25,8.41 L9.55,8.63 L9.67,8.57 L9.78,8.52 L9.90,8.47 L10.03,8.42 L10.15,8.39 L10.21,8.02 L10.29,7.58 L10.44,7.42 L10.62,7.40 L10.80,7.40 L10.98,7.40 L11.16,7.42 L11.31,7.58 L11.39,8.02 L11.45,8.39 L11.57,8.42 L11.70,8.47 L11.82,8.52 L11.93,8.57 L12.05,8.63 L12.35,8.41 L12.71,8.17 L12.94,8.16 L13.08,8.27 L13.20,8.40 L13.33,8.52 L13.44,8.66 L13.43,8.89 L13.19,9.25 L12.97,9.55 L13.03,9.67 L13.08,9.78 L13.13,9.90 L13.18,10.03 L13.21,10.15 L13.58,10.21 L14.02,10.29 L14.18,10.44 L14.20,10.62 L14.20,10.80Z" fill="none" stroke="#c4c4c4" stroke-width="1"/><circle cx="10.8" cy="10.8" r="1" fill="none" stroke="#c4c4c4" stroke-width=".8"/></svg></div><div class="ti" style="left:48px;top:213px">99999AutoForms---AutoFormCarSeeker</div>
<div class="ico" style="left:30px;top:232px;width:16px;height:16px;border-color:#555"><svg width="15" height="15" viewBox="0 0 15 15" style="position:absolute;left:0;top:0"><path d="M9.80,5.20 L9.79,5.43 L9.78,5.65 L9.57,5.85 L9.04,5.95 L8.59,6.03 L8.54,6.19 L8.49,6.35 L8.42,6.50 L8.35,6.65 L8.27,6.80 L8.54,7.17 L8.84,7.62 L8.84,7.91 L8.70,8.08 L8.54,8.24 L8.38,8.40 L8.21,8.54 L7.92,8.54 L7.47,8.24 L7.10,7.97 L6.95,8.05 L6.80,8.12 L6.65,8.19 L6.49,8.24 L6.33,8.29 L6.25,8.74 L6.15,9.27 L5.95,9.48 L5.73,9.49 L5.50,9.50 L5.27,9.49 L5.05,9.48 L4.85,9.27 L4.75,8.74 L4.67,8.29 L4.51,8.24 L4.35,8.19 L4.20,8.12 L4.05,8.05 L3.90,7.97 L3.53,8.24 L3.08,8.54 L2.79,8.54 L2.62,8.40 L2.46,8.24 L2.30,8.08 L2.16,7.91 L2.16,7.62 L2.46,7.17 L2.73,6.80 L2.65,6.65 L2.58,6.50 L2.51,6.35 L2.46,6.19 L2.41,6.03 L1.96,5.95 L1.43,5.85 L1.22,5.65 L1.21,5.43 L1.20,5.20 L1.21,4.97 L1.22,4.75 L1.43,4.55 L1.96,4.45 L2.41,4.37 L2.46,4.21 L2.51,4.05 L2.58,3.90 L2.65,3.75 L2.73,3.60 L2.46,3.23 L2.16,2.78 L2.16,2.49 L2.30,2.32 L2.46,2.16 L2.62,2.00 L2.79,1.86 L3.08,1.86 L3.53,2.16 L3.90,2.43 L4.05,2.35 L4.20,2.28 L4.35,2.21 L4.51,2.16 L4.67,2.11 L4.75,1.66 L4.85,1.13 L5.05,0.92 L5.27,0.91 L5.50,0.90 L5.73,0.91 L5.95,0.92 L6.15,1.13 L6.25,1.66 L6.33,2.11 L6.49,2.16 L6.65,2.21 L6.80,2.28 L6.95,2.35 L7.10,2.43 L7.47,2.16 L7.92,1.86 L8.21,1.86 L8.38,2.00 L8.54,2.16 L8.70,2.32 L8.84,2.49 L8.84,2.78 L8.54,3.23 L8.27,3.60 L8.35,3.75 L8.42,3.90 L8.49,4.05 L8.54,4.21 L8.59,4.37 L9.04,4.45 L9.57,4.55 L9.78,4.75 L9.79,4.97 L9.80,5.20Z" fill="none" stroke="#f3ac4a" stroke-width="1.1"/><circle cx="5.5" cy="5.2" r="1.3" fill="none" stroke="#f3ac4a" stroke-width="1"/><path d="M2.8,10.8 q2.7,.9 5.4,0" stroke="#f3ac4a" stroke-width=".8" fill="none" opacity=".7"/><path d="M14.20,10.80 L14.20,10.98 L14.18,11.16 L14.02,11.31 L13.58,11.39 L13.21,11.45 L13.18,11.57 L13.13,11.70 L13.08,11.82 L13.03,11.93 L12.97,12.05 L13.19,12.35 L13.43,12.71 L13.44,12.94 L13.33,13.08 L13.20,13.20 L13.08,13.33 L12.94,13.44 L12.71,13.43 L12.35,13.19 L12.05,12.97 L11.93,13.03 L11.82,13.08 L11.70,13.13 L11.57,13.18 L11.45,13.21 L11.39,13.58 L11.31,14.02 L11.16,14.18 L10.98,14.20 L10.80,14.20 L10.62,14.20 L10.44,14.18 L10.29,14.02 L10.21,13.58 L10.15,13.21 L10.03,13.18 L9.90,13.13 L9.78,13.08 L9.67,13.03 L9.55,12.97 L9.25,13.19 L8.89,13.43 L8.66,13.44 L8.52,13.33 L8.40,13.20 L8.27,13.08 L8.16,12.94 L8.17,12.71 L8.41,12.35 L8.63,12.05 L8.57,11.93 L8.52,11.82 L8.47,11.70 L8.42,11.57 L8.39,11.45 L8.02,11.39 L7.58,11.31 L7.42,11.16 L7.40,10.98 L7.40,10.80 L7.40,10.62 L7.42,10.44 L7.58,10.29 L8.02,10.21 L8.39,10.15 L8.42,10.03 L8.47,9.90 L8.52,9.78 L8.57,9.67 L8.63,9.55 L8.41,9.25 L8.17,8.89 L8.16,8.66 L8.27,8.52 L8.40,8.40 L8.52,8.27 L8.66,8.16 L8.89,8.17 L9.25,8.41 L9.55,8.63 L9.67,8.57 L9.78,8.52 L9.90,8.47 L10.03,8.42 L10.15,8.39 L10.21,8.02 L10.29,7.58 L10.44,7.42 L10.62,7.40 L10.80,7.40 L10.98,7.40 L11.16,7.42 L11.31,7.58 L11.39,8.02 L11.45,8.39 L11.57,8.42 L11.70,8.47 L11.82,8.52 L11.93,8.57 L12.05,8.63 L12.35,8.41 L12.71,8.17 L12.94,8.16 L13.08,8.27 L13.20,8.40 L13.33,8.52 L13.44,8.66 L13.43,8.89 L13.19,9.25 L12.97,9.55 L13.03,9.67 L13.08,9.78 L13.13,9.90 L13.18,10.03 L13.21,10.15 L13.58,10.21 L14.02,10.29 L14.18,10.44 L14.20,10.62 L14.20,10.80Z" fill="none" stroke="#c4c4c4" stroke-width="1"/><circle cx="10.8" cy="10.8" r="1" fill="none" stroke="#c4c4c4" stroke-width=".8"/></svg></div><div class="ti" style="left:48px;top:234px">99999AutoForms---CreateAndAddCar</div>
<div class="ico" style="left:30px;top:253px;width:16px;height:16px;border-color:#555"><svg width="15" height="15" viewBox="0 0 15 15" style="position:absolute;left:0;top:0"><path d="M9.80,5.20 L9.79,5.43 L9.78,5.65 L9.57,5.85 L9.04,5.95 L8.59,6.03 L8.54,6.19 L8.49,6.35 L8.42,6.50 L8.35,6.65 L8.27,6.80 L8.54,7.17 L8.84,7.62 L8.84,7.91 L8.70,8.08 L8.54,8.24 L8.38,8.40 L8.21,8.54 L7.92,8.54 L7.47,8.24 L7.10,7.97 L6.95,8.05 L6.80,8.12 L6.65,8.19 L6.49,8.24 L6.33,8.29 L6.25,8.74 L6.15,9.27 L5.95,9.48 L5.73,9.49 L5.50,9.50 L5.27,9.49 L5.05,9.48 L4.85,9.27 L4.75,8.74 L4.67,8.29 L4.51,8.24 L4.35,8.19 L4.20,8.12 L4.05,8.05 L3.90,7.97 L3.53,8.24 L3.08,8.54 L2.79,8.54 L2.62,8.40 L2.46,8.24 L2.30,8.08 L2.16,7.91 L2.16,7.62 L2.46,7.17 L2.73,6.80 L2.65,6.65 L2.58,6.50 L2.51,6.35 L2.46,6.19 L2.41,6.03 L1.96,5.95 L1.43,5.85 L1.22,5.65 L1.21,5.43 L1.20,5.20 L1.21,4.97 L1.22,4.75 L1.43,4.55 L1.96,4.45 L2.41,4.37 L2.46,4.21 L2.51,4.05 L2.58,3.90 L2.65,3.75 L2.73,3.60 L2.46,3.23 L2.16,2.78 L2.16,2.49 L2.30,2.32 L2.46,2.16 L2.62,2.00 L2.79,1.86 L3.08,1.86 L3.53,2.16 L3.90,2.43 L4.05,2.35 L4.20,2.28 L4.35,2.21 L4.51,2.16 L4.67,2.11 L4.75,1.66 L4.85,1.13 L5.05,0.92 L5.27,0.91 L5.50,0.90 L5.73,0.91 L5.95,0.92 L6.15,1.13 L6.25,1.66 L6.33,2.11 L6.49,2.16 L6.65,2.21 L6.80,2.28 L6.95,2.35 L7.10,2.43 L7.47,2.16 L7.92,1.86 L8.21,1.86 L8.38,2.00 L8.54,2.16 L8.70,2.32 L8.84,2.49 L8.84,2.78 L8.54,3.23 L8.27,3.60 L8.35,3.75 L8.42,3.90 L8.49,4.05 L8.54,4.21 L8.59,4.37 L9.04,4.45 L9.57,4.55 L9.78,4.75 L9.79,4.97 L9.80,5.20Z" fill="none" stroke="#f3ac4a" stroke-width="1.1"/><circle cx="5.5" cy="5.2" r="1.3" fill="none" stroke="#f3ac4a" stroke-width="1"/><path d="M2.8,10.8 q2.7,.9 5.4,0" stroke="#f3ac4a" stroke-width=".8" fill="none" opacity=".7"/><path d="M14.20,10.80 L14.20,10.98 L14.18,11.16 L14.02,11.31 L13.58,11.39 L13.21,11.45 L13.18,11.57 L13.13,11.70 L13.08,11.82 L13.03,11.93 L12.97,12.05 L13.19,12.35 L13.43,12.71 L13.44,12.94 L13.33,13.08 L13.20,13.20 L13.08,13.33 L12.94,13.44 L12.71,13.43 L12.35,13.19 L12.05,12.97 L11.93,13.03 L11.82,13.08 L11.70,13.13 L11.57,13.18 L11.45,13.21 L11.39,13.58 L11.31,14.02 L11.16,14.18 L10.98,14.20 L10.80,14.20 L10.62,14.20 L10.44,14.18 L10.29,14.02 L10.21,13.58 L10.15,13.21 L10.03,13.18 L9.90,13.13 L9.78,13.08 L9.67,13.03 L9.55,12.97 L9.25,13.19 L8.89,13.43 L8.66,13.44 L8.52,13.33 L8.40,13.20 L8.27,13.08 L8.16,12.94 L8.17,12.71 L8.41,12.35 L8.63,12.05 L8.57,11.93 L8.52,11.82 L8.47,11.70 L8.42,11.57 L8.39,11.45 L8.02,11.39 L7.58,11.31 L7.42,11.16 L7.40,10.98 L7.40,10.80 L7.40,10.62 L7.42,10.44 L7.58,10.29 L8.02,10.21 L8.39,10.15 L8.42,10.03 L8.47,9.90 L8.52,9.78 L8.57,9.67 L8.63,9.55 L8.41,9.25 L8.17,8.89 L8.16,8.66 L8.27,8.52 L8.40,8.40 L8.52,8.27 L8.66,8.16 L8.89,8.17 L9.25,8.41 L9.55,8.63 L9.67,8.57 L9.78,8.52 L9.90,8.47 L10.03,8.42 L10.15,8.39 L10.21,8.02 L10.29,7.58 L10.44,7.42 L10.62,7.40 L10.80,7.40 L10.98,7.40 L11.16,7.42 L11.31,7.58 L11.39,8.02 L11.45,8.39 L11.57,8.42 L11.70,8.47 L11.82,8.52 L11.93,8.57 L12.05,8.63 L12.35,8.41 L12.71,8.17 L12.94,8.16 L13.08,8.27 L13.20,8.40 L13.33,8.52 L13.44,8.66 L13.43,8.89 L13.19,9.25 L12.97,9.55 L13.03,9.67 L13.08,9.78 L13.13,9.90 L13.18,10.03 L13.21,10.15 L13.58,10.21 L14.02,10.29 L14.18,10.44 L14.20,10.62 L14.20,10.80Z" fill="none" stroke="#c4c4c4" stroke-width="1"/><circle cx="10.8" cy="10.8" r="1" fill="none" stroke="#c4c4c4" stroke-width=".8"/></svg></div><div class="ti" style="left:48px;top:255px">99999AutoForms---CreateAndAddCar</div>
<div class="ico" style="left:30px;top:274px;width:16px;height:16px;border-color:#555"><svg width="15" height="15" viewBox="0 0 15 15" style="position:absolute;left:0;top:0"><path d="M9.80,5.20 L9.79,5.43 L9.78,5.65 L9.57,5.85 L9.04,5.95 L8.59,6.03 L8.54,6.19 L8.49,6.35 L8.42,6.50 L8.35,6.65 L8.27,6.80 L8.54,7.17 L8.84,7.62 L8.84,7.91 L8.70,8.08 L8.54,8.24 L8.38,8.40 L8.21,8.54 L7.92,8.54 L7.47,8.24 L7.10,7.97 L6.95,8.05 L6.80,8.12 L6.65,8.19 L6.49,8.24 L6.33,8.29 L6.25,8.74 L6.15,9.27 L5.95,9.48 L5.73,9.49 L5.50,9.50 L5.27,9.49 L5.05,9.48 L4.85,9.27 L4.75,8.74 L4.67,8.29 L4.51,8.24 L4.35,8.19 L4.20,8.12 L4.05,8.05 L3.90,7.97 L3.53,8.24 L3.08,8.54 L2.79,8.54 L2.62,8.40 L2.46,8.24 L2.30,8.08 L2.16,7.91 L2.16,7.62 L2.46,7.17 L2.73,6.80 L2.65,6.65 L2.58,6.50 L2.51,6.35 L2.46,6.19 L2.41,6.03 L1.96,5.95 L1.43,5.85 L1.22,5.65 L1.21,5.43 L1.20,5.20 L1.21,4.97 L1.22,4.75 L1.43,4.55 L1.96,4.45 L2.41,4.37 L2.46,4.21 L2.51,4.05 L2.58,3.90 L2.65,3.75 L2.73,3.60 L2.46,3.23 L2.16,2.78 L2.16,2.49 L2.30,2.32 L2.46,2.16 L2.62,2.00 L2.79,1.86 L3.08,1.86 L3.53,2.16 L3.90,2.43 L4.05,2.35 L4.20,2.28 L4.35,2.21 L4.51,2.16 L4.67,2.11 L4.75,1.66 L4.85,1.13 L5.05,0.92 L5.27,0.91 L5.50,0.90 L5.73,0.91 L5.95,0.92 L6.15,1.13 L6.25,1.66 L6.33,2.11 L6.49,2.16 L6.65,2.21 L6.80,2.28 L6.95,2.35 L7.10,2.43 L7.47,2.16 L7.92,1.86 L8.21,1.86 L8.38,2.00 L8.54,2.16 L8.70,2.32 L8.84,2.49 L8.84,2.78 L8.54,3.23 L8.27,3.60 L8.35,3.75 L8.42,3.90 L8.49,4.05 L8.54,4.21 L8.59,4.37 L9.04,4.45 L9.57,4.55 L9.78,4.75 L9.79,4.97 L9.80,5.20Z" fill="none" stroke="#f3ac4a" stroke-width="1.1"/><circle cx="5.5" cy="5.2" r="1.3" fill="none" stroke="#f3ac4a" stroke-width="1"/><path d="M2.8,10.8 q2.7,.9 5.4,0" stroke="#f3ac4a" stroke-width=".8" fill="none" opacity=".7"/><path d="M14.20,10.80 L14.20,10.98 L14.18,11.16 L14.02,11.31 L13.58,11.39 L13.21,11.45 L13.18,11.57 L13.13,11.70 L13.08,11.82 L13.03,11.93 L12.97,12.05 L13.19,12.35 L13.43,12.71 L13.44,12.94 L13.33,13.08 L13.20,13.20 L13.08,13.33 L12.94,13.44 L12.71,13.43 L12.35,13.19 L12.05,12.97 L11.93,13.03 L11.82,13.08 L11.70,13.13 L11.57,13.18 L11.45,13.21 L11.39,13.58 L11.31,14.02 L11.16,14.18 L10.98,14.20 L10.80,14.20 L10.62,14.20 L10.44,14.18 L10.29,14.02 L10.21,13.58 L10.15,13.21 L10.03,13.18 L9.90,13.13 L9.78,13.08 L9.67,13.03 L9.55,12.97 L9.25,13.19 L8.89,13.43 L8.66,13.44 L8.52,13.33 L8.40,13.20 L8.27,13.08 L8.16,12.94 L8.17,12.71 L8.41,12.35 L8.63,12.05 L8.57,11.93 L8.52,11.82 L8.47,11.70 L8.42,11.57 L8.39,11.45 L8.02,11.39 L7.58,11.31 L7.42,11.16 L7.40,10.98 L7.40,10.80 L7.40,10.62 L7.42,10.44 L7.58,10.29 L8.02,10.21 L8.39,10.15 L8.42,10.03 L8.47,9.90 L8.52,9.78 L8.57,9.67 L8.63,9.55 L8.41,9.25 L8.17,8.89 L8.16,8.66 L8.27,8.52 L8.40,8.40 L8.52,8.27 L8.66,8.16 L8.89,8.17 L9.25,8.41 L9.55,8.63 L9.67,8.57 L9.78,8.52 L9.90,8.47 L10.03,8.42 L10.15,8.39 L10.21,8.02 L10.29,7.58 L10.44,7.42 L10.62,7.40 L10.80,7.40 L10.98,7.40 L11.16,7.42 L11.31,7.58 L11.39,8.02 L11.45,8.39 L11.57,8.42 L11.70,8.47 L11.82,8.52 L11.93,8.57 L12.05,8.63 L12.35,8.41 L12.71,8.17 L12.94,8.16 L13.08,8.27 L13.20,8.40 L13.33,8.52 L13.44,8.66 L13.43,8.89 L13.19,9.25 L12.97,9.55 L13.03,9.67 L13.08,9.78 L13.13,9.90 L13.18,10.03 L13.21,10.15 L13.58,10.21 L14.02,10.29 L14.18,10.44 L14.20,10.62 L14.20,10.80Z" fill="none" stroke="#c4c4c4" stroke-width="1"/><circle cx="10.8" cy="10.8" r="1" fill="none" stroke="#c4c4c4" stroke-width=".8"/></svg></div><div class="ti" style="left:48px;top:276px">99999AutoForms---DeleteThis</div>
<div class="ico" style="left:30px;top:295px;width:16px;height:16px;border-color:#555"><svg width="15" height="15" viewBox="0 0 15 15" style="position:absolute;left:0;top:0"><path d="M9.80,5.20 L9.79,5.43 L9.78,5.65 L9.57,5.85 L9.04,5.95 L8.59,6.03 L8.54,6.19 L8.49,6.35 L8.42,6.50 L8.35,6.65 L8.27,6.80 L8.54,7.17 L8.84,7.62 L8.84,7.91 L8.70,8.08 L8.54,8.24 L8.38,8.40 L8.21,8.54 L7.92,8.54 L7.47,8.24 L7.10,7.97 L6.95,8.05 L6.80,8.12 L6.65,8.19 L6.49,8.24 L6.33,8.29 L6.25,8.74 L6.15,9.27 L5.95,9.48 L5.73,9.49 L5.50,9.50 L5.27,9.49 L5.05,9.48 L4.85,9.27 L4.75,8.74 L4.67,8.29 L4.51,8.24 L4.35,8.19 L4.20,8.12 L4.05,8.05 L3.90,7.97 L3.53,8.24 L3.08,8.54 L2.79,8.54 L2.62,8.40 L2.46,8.24 L2.30,8.08 L2.16,7.91 L2.16,7.62 L2.46,7.17 L2.73,6.80 L2.65,6.65 L2.58,6.50 L2.51,6.35 L2.46,6.19 L2.41,6.03 L1.96,5.95 L1.43,5.85 L1.22,5.65 L1.21,5.43 L1.20,5.20 L1.21,4.97 L1.22,4.75 L1.43,4.55 L1.96,4.45 L2.41,4.37 L2.46,4.21 L2.51,4.05 L2.58,3.90 L2.65,3.75 L2.73,3.60 L2.46,3.23 L2.16,2.78 L2.16,2.49 L2.30,2.32 L2.46,2.16 L2.62,2.00 L2.79,1.86 L3.08,1.86 L3.53,2.16 L3.90,2.43 L4.05,2.35 L4.20,2.28 L4.35,2.21 L4.51,2.16 L4.67,2.11 L4.75,1.66 L4.85,1.13 L5.05,0.92 L5.27,0.91 L5.50,0.90 L5.73,0.91 L5.95,0.92 L6.15,1.13 L6.25,1.66 L6.33,2.11 L6.49,2.16 L6.65,2.21 L6.80,2.28 L6.95,2.35 L7.10,2.43 L7.47,2.16 L7.92,1.86 L8.21,1.86 L8.38,2.00 L8.54,2.16 L8.70,2.32 L8.84,2.49 L8.84,2.78 L8.54,3.23 L8.27,3.60 L8.35,3.75 L8.42,3.90 L8.49,4.05 L8.54,4.21 L8.59,4.37 L9.04,4.45 L9.57,4.55 L9.78,4.75 L9.79,4.97 L9.80,5.20Z" fill="none" stroke="#f3ac4a" stroke-width="1.1"/><circle cx="5.5" cy="5.2" r="1.3" fill="none" stroke="#f3ac4a" stroke-width="1"/><path d="M2.8,10.8 q2.7,.9 5.4,0" stroke="#f3ac4a" stroke-width=".8" fill="none" opacity=".7"/><path d="M14.20,10.80 L14.20,10.98 L14.18,11.16 L14.02,11.31 L13.58,11.39 L13.21,11.45 L13.18,11.57 L13.13,11.70 L13.08,11.82 L13.03,11.93 L12.97,12.05 L13.19,12.35 L13.43,12.71 L13.44,12.94 L13.33,13.08 L13.20,13.20 L13.08,13.33 L12.94,13.44 L12.71,13.43 L12.35,13.19 L12.05,12.97 L11.93,13.03 L11.82,13.08 L11.70,13.13 L11.57,13.18 L11.45,13.21 L11.39,13.58 L11.31,14.02 L11.16,14.18 L10.98,14.20 L10.80,14.20 L10.62,14.20 L10.44,14.18 L10.29,14.02 L10.21,13.58 L10.15,13.21 L10.03,13.18 L9.90,13.13 L9.78,13.08 L9.67,13.03 L9.55,12.97 L9.25,13.19 L8.89,13.43 L8.66,13.44 L8.52,13.33 L8.40,13.20 L8.27,13.08 L8.16,12.94 L8.17,12.71 L8.41,12.35 L8.63,12.05 L8.57,11.93 L8.52,11.82 L8.47,11.70 L8.42,11.57 L8.39,11.45 L8.02,11.39 L7.58,11.31 L7.42,11.16 L7.40,10.98 L7.40,10.80 L7.40,10.62 L7.42,10.44 L7.58,10.29 L8.02,10.21 L8.39,10.15 L8.42,10.03 L8.47,9.90 L8.52,9.78 L8.57,9.67 L8.63,9.55 L8.41,9.25 L8.17,8.89 L8.16,8.66 L8.27,8.52 L8.40,8.40 L8.52,8.27 L8.66,8.16 L8.89,8.17 L9.25,8.41 L9.55,8.63 L9.67,8.57 L9.78,8.52 L9.90,8.47 L10.03,8.42 L10.15,8.39 L10.21,8.02 L10.29,7.58 L10.44,7.42 L10.62,7.40 L10.80,7.40 L10.98,7.40 L11.16,7.42 L11.31,7.58 L11.39,8.02 L11.45,8.39 L11.57,8.42 L11.70,8.47 L11.82,8.52 L11.93,8.57 L12.05,8.63 L12.35,8.41 L12.71,8.17 L12.94,8.16 L13.08,8.27 L13.20,8.40 L13.33,8.52 L13.44,8.66 L13.43,8.89 L13.19,9.25 L12.97,9.55 L13.03,9.67 L13.08,9.78 L13.13,9.90 L13.18,10.03 L13.21,10.15 L13.58,10.21 L14.02,10.29 L14.18,10.44 L14.20,10.62 L14.20,10.80Z" fill="none" stroke="#c4c4c4" stroke-width="1"/><circle cx="10.8" cy="10.8" r="1" fill="none" stroke="#c4c4c4" stroke-width=".8"/></svg></div><div class="ti" style="left:48px;top:297px">99999AutoForms---DeleteThis</div>
<div class="ico" style="left:30px;top:316px;width:16px;height:16px;border-color:#555"><svg width="15" height="15" viewBox="0 0 15 15" style="position:absolute;left:0;top:0"><path d="M9.80,5.20 L9.79,5.43 L9.78,5.65 L9.57,5.85 L9.04,5.95 L8.59,6.03 L8.54,6.19 L8.49,6.35 L8.42,6.50 L8.35,6.65 L8.27,6.80 L8.54,7.17 L8.84,7.62 L8.84,7.91 L8.70,8.08 L8.54,8.24 L8.38,8.40 L8.21,8.54 L7.92,8.54 L7.47,8.24 L7.10,7.97 L6.95,8.05 L6.80,8.12 L6.65,8.19 L6.49,8.24 L6.33,8.29 L6.25,8.74 L6.15,9.27 L5.95,9.48 L5.73,9.49 L5.50,9.50 L5.27,9.49 L5.05,9.48 L4.85,9.27 L4.75,8.74 L4.67,8.29 L4.51,8.24 L4.35,8.19 L4.20,8.12 L4.05,8.05 L3.90,7.97 L3.53,8.24 L3.08,8.54 L2.79,8.54 L2.62,8.40 L2.46,8.24 L2.30,8.08 L2.16,7.91 L2.16,7.62 L2.46,7.17 L2.73,6.80 L2.65,6.65 L2.58,6.50 L2.51,6.35 L2.46,6.19 L2.41,6.03 L1.96,5.95 L1.43,5.85 L1.22,5.65 L1.21,5.43 L1.20,5.20 L1.21,4.97 L1.22,4.75 L1.43,4.55 L1.96,4.45 L2.41,4.37 L2.46,4.21 L2.51,4.05 L2.58,3.90 L2.65,3.75 L2.73,3.60 L2.46,3.23 L2.16,2.78 L2.16,2.49 L2.30,2.32 L2.46,2.16 L2.62,2.00 L2.79,1.86 L3.08,1.86 L3.53,2.16 L3.90,2.43 L4.05,2.35 L4.20,2.28 L4.35,2.21 L4.51,2.16 L4.67,2.11 L4.75,1.66 L4.85,1.13 L5.05,0.92 L5.27,0.91 L5.50,0.90 L5.73,0.91 L5.95,0.92 L6.15,1.13 L6.25,1.66 L6.33,2.11 L6.49,2.16 L6.65,2.21 L6.80,2.28 L6.95,2.35 L7.10,2.43 L7.47,2.16 L7.92,1.86 L8.21,1.86 L8.38,2.00 L8.54,2.16 L8.70,2.32 L8.84,2.49 L8.84,2.78 L8.54,3.23 L8.27,3.60 L8.35,3.75 L8.42,3.90 L8.49,4.05 L8.54,4.21 L8.59,4.37 L9.04,4.45 L9.57,4.55 L9.78,4.75 L9.79,4.97 L9.80,5.20Z" fill="none" stroke="#f3ac4a" stroke-width="1.1"/><circle cx="5.5" cy="5.2" r="1.3" fill="none" stroke="#f3ac4a" stroke-width="1"/><path d="M2.8,10.8 q2.7,.9 5.4,0" stroke="#f3ac4a" stroke-width=".8" fill="none" opacity=".7"/><path d="M14.20,10.80 L14.20,10.98 L14.18,11.16 L14.02,11.31 L13.58,11.39 L13.21,11.45 L13.18,11.57 L13.13,11.70 L13.08,11.82 L13.03,11.93 L12.97,12.05 L13.19,12.35 L13.43,12.71 L13.44,12.94 L13.33,13.08 L13.20,13.20 L13.08,13.33 L12.94,13.44 L12.71,13.43 L12.35,13.19 L12.05,12.97 L11.93,13.03 L11.82,13.08 L11.70,13.13 L11.57,13.18 L11.45,13.21 L11.39,13.58 L11.31,14.02 L11.16,14.18 L10.98,14.20 L10.80,14.20 L10.62,14.20 L10.44,14.18 L10.29,14.02 L10.21,13.58 L10.15,13.21 L10.03,13.18 L9.90,13.13 L9.78,13.08 L9.67,13.03 L9.55,12.97 L9.25,13.19 L8.89,13.43 L8.66,13.44 L8.52,13.33 L8.40,13.20 L8.27,13.08 L8.16,12.94 L8.17,12.71 L8.41,12.35 L8.63,12.05 L8.57,11.93 L8.52,11.82 L8.47,11.70 L8.42,11.57 L8.39,11.45 L8.02,11.39 L7.58,11.31 L7.42,11.16 L7.40,10.98 L7.40,10.80 L7.40,10.62 L7.42,10.44 L7.58,10.29 L8.02,10.21 L8.39,10.15 L8.42,10.03 L8.47,9.90 L8.52,9.78 L8.57,9.67 L8.63,9.55 L8.41,9.25 L8.17,8.89 L8.16,8.66 L8.27,8.52 L8.40,8.40 L8.52,8.27 L8.66,8.16 L8.89,8.17 L9.25,8.41 L9.55,8.63 L9.67,8.57 L9.78,8.52 L9.90,8.47 L10.03,8.42 L10.15,8.39 L10.21,8.02 L10.29,7.58 L10.44,7.42 L10.62,7.40 L10.80,7.40 L10.98,7.40 L11.16,7.42 L11.31,7.58 L11.39,8.02 L11.45,8.39 L11.57,8.42 L11.70,8.47 L11.82,8.52 L11.93,8.57 L12.05,8.63 L12.35,8.41 L12.71,8.17 L12.94,8.16 L13.08,8.27 L13.20,8.40 L13.33,8.52 L13.44,8.66 L13.43,8.89 L13.19,9.25 L12.97,9.55 L13.03,9.67 L13.08,9.78 L13.13,9.90 L13.18,10.03 L13.21,10.15 L13.58,10.21 L14.02,10.29 L14.18,10.44 L14.20,10.62 L14.20,10.80Z" fill="none" stroke="#c4c4c4" stroke-width="1"/><circle cx="10.8" cy="10.8" r="1" fill="none" stroke="#c4c4c4" stroke-width=".8"/></svg></div><div class="ti" style="left:48px;top:318px">99999AutoForms---DeleteThis</div>
<div class="ico" style="left:30px;top:337px;width:16px;height:16px;border-color:#555"><svg width="15" height="15" viewBox="0 0 15 15" style="position:absolute;left:0;top:0"><path d="M9.80,5.20 L9.79,5.43 L9.78,5.65 L9.57,5.85 L9.04,5.95 L8.59,6.03 L8.54,6.19 L8.49,6.35 L8.42,6.50 L8.35,6.65 L8.27,6.80 L8.54,7.17 L8.84,7.62 L8.84,7.91 L8.70,8.08 L8.54,8.24 L8.38,8.40 L8.21,8.54 L7.92,8.54 L7.47,8.24 L7.10,7.97 L6.95,8.05 L6.80,8.12 L6.65,8.19 L6.49,8.24 L6.33,8.29 L6.25,8.74 L6.15,9.27 L5.95,9.48 L5.73,9.49 L5.50,9.50 L5.27,9.49 L5.05,9.48 L4.85,9.27 L4.75,8.74 L4.67,8.29 L4.51,8.24 L4.35,8.19 L4.20,8.12 L4.05,8.05 L3.90,7.97 L3.53,8.24 L3.08,8.54 L2.79,8.54 L2.62,8.40 L2.46,8.24 L2.30,8.08 L2.16,7.91 L2.16,7.62 L2.46,7.17 L2.73,6.80 L2.65,6.65 L2.58,6.50 L2.51,6.35 L2.46,6.19 L2.41,6.03 L1.96,5.95 L1.43,5.85 L1.22,5.65 L1.21,5.43 L1.20,5.20 L1.21,4.97 L1.22,4.75 L1.43,4.55 L1.96,4.45 L2.41,4.37 L2.46,4.21 L2.51,4.05 L2.58,3.90 L2.65,3.75 L2.73,3.60 L2.46,3.23 L2.16,2.78 L2.16,2.49 L2.30,2.32 L2.46,2.16 L2.62,2.00 L2.79,1.86 L3.08,1.86 L3.53,2.16 L3.90,2.43 L4.05,2.35 L4.20,2.28 L4.35,2.21 L4.51,2.16 L4.67,2.11 L4.75,1.66 L4.85,1.13 L5.05,0.92 L5.27,0.91 L5.50,0.90 L5.73,0.91 L5.95,0.92 L6.15,1.13 L6.25,1.66 L6.33,2.11 L6.49,2.16 L6.65,2.21 L6.80,2.28 L6.95,2.35 L7.10,2.43 L7.47,2.16 L7.92,1.86 L8.21,1.86 L8.38,2.00 L8.54,2.16 L8.70,2.32 L8.84,2.49 L8.84,2.78 L8.54,3.23 L8.27,3.60 L8.35,3.75 L8.42,3.90 L8.49,4.05 L8.54,4.21 L8.59,4.37 L9.04,4.45 L9.57,4.55 L9.78,4.75 L9.79,4.97 L9.80,5.20Z" fill="none" stroke="#f3ac4a" stroke-width="1.1"/><circle cx="5.5" cy="5.2" r="1.3" fill="none" stroke="#f3ac4a" stroke-width="1"/><path d="M2.8,10.8 q2.7,.9 5.4,0" stroke="#f3ac4a" stroke-width=".8" fill="none" opacity=".7"/><path d="M14.20,10.80 L14.20,10.98 L14.18,11.16 L14.02,11.31 L13.58,11.39 L13.21,11.45 L13.18,11.57 L13.13,11.70 L13.08,11.82 L13.03,11.93 L12.97,12.05 L13.19,12.35 L13.43,12.71 L13.44,12.94 L13.33,13.08 L13.20,13.20 L13.08,13.33 L12.94,13.44 L12.71,13.43 L12.35,13.19 L12.05,12.97 L11.93,13.03 L11.82,13.08 L11.70,13.13 L11.57,13.18 L11.45,13.21 L11.39,13.58 L11.31,14.02 L11.16,14.18 L10.98,14.20 L10.80,14.20 L10.62,14.20 L10.44,14.18 L10.29,14.02 L10.21,13.58 L10.15,13.21 L10.03,13.18 L9.90,13.13 L9.78,13.08 L9.67,13.03 L9.55,12.97 L9.25,13.19 L8.89,13.43 L8.66,13.44 L8.52,13.33 L8.40,13.20 L8.27,13.08 L8.16,12.94 L8.17,12.71 L8.41,12.35 L8.63,12.05 L8.57,11.93 L8.52,11.82 L8.47,11.70 L8.42,11.57 L8.39,11.45 L8.02,11.39 L7.58,11.31 L7.42,11.16 L7.40,10.98 L7.40,10.80 L7.40,10.62 L7.42,10.44 L7.58,10.29 L8.02,10.21 L8.39,10.15 L8.42,10.03 L8.47,9.90 L8.52,9.78 L8.57,9.67 L8.63,9.55 L8.41,9.25 L8.17,8.89 L8.16,8.66 L8.27,8.52 L8.40,8.40 L8.52,8.27 L8.66,8.16 L8.89,8.17 L9.25,8.41 L9.55,8.63 L9.67,8.57 L9.78,8.52 L9.90,8.47 L10.03,8.42 L10.15,8.39 L10.21,8.02 L10.29,7.58 L10.44,7.42 L10.62,7.40 L10.80,7.40 L10.98,7.40 L11.16,7.42 L11.31,7.58 L11.39,8.02 L11.45,8.39 L11.57,8.42 L11.70,8.47 L11.82,8.52 L11.93,8.57 L12.05,8.63 L12.35,8.41 L12.71,8.17 L12.94,8.16 L13.08,8.27 L13.20,8.40 L13.33,8.52 L13.44,8.66 L13.43,8.89 L13.19,9.25 L12.97,9.55 L13.03,9.67 L13.08,9.78 L13.13,9.90 L13.18,10.03 L13.21,10.15 L13.58,10.21 L14.02,10.29 L14.18,10.44 L14.20,10.62 L14.20,10.80Z" fill="none" stroke="#c4c4c4" stroke-width="1"/><circle cx="10.8" cy="10.8" r="1" fill="none" stroke="#c4c4c4" stroke-width=".8"/></svg></div><div class="ti" style="left:48px;top:339px">---DeleteThis</div>
<div class="ico" style="left:30px;top:358px;width:16px;height:16px;border-color:#555"><svg width="15" height="15" viewBox="0 0 15 15" style="position:absolute;left:0;top:0"><path d="M9.80,5.20 L9.79,5.43 L9.78,5.65 L9.57,5.85 L9.04,5.95 L8.59,6.03 L8.54,6.19 L8.49,6.35 L8.42,6.50 L8.35,6.65 L8.27,6.80 L8.54,7.17 L8.84,7.62 L8.84,7.91 L8.70,8.08 L8.54,8.24 L8.38,8.40 L8.21,8.54 L7.92,8.54 L7.47,8.24 L7.10,7.97 L6.95,8.05 L6.80,8.12 L6.65,8.19 L6.49,8.24 L6.33,8.29 L6.25,8.74 L6.15,9.27 L5.95,9.48 L5.73,9.49 L5.50,9.50 L5.27,9.49 L5.05,9.48 L4.85,9.27 L4.75,8.74 L4.67,8.29 L4.51,8.24 L4.35,8.19 L4.20,8.12 L4.05,8.05 L3.90,7.97 L3.53,8.24 L3.08,8.54 L2.79,8.54 L2.62,8.40 L2.46,8.24 L2.30,8.08 L2.16,7.91 L2.16,7.62 L2.46,7.17 L2.73,6.80 L2.65,6.65 L2.58,6.50 L2.51,6.35 L2.46,6.19 L2.41,6.03 L1.96,5.95 L1.43,5.85 L1.22,5.65 L1.21,5.43 L1.20,5.20 L1.21,4.97 L1.22,4.75 L1.43,4.55 L1.96,4.45 L2.41,4.37 L2.46,4.21 L2.51,4.05 L2.58,3.90 L2.65,3.75 L2.73,3.60 L2.46,3.23 L2.16,2.78 L2.16,2.49 L2.30,2.32 L2.46,2.16 L2.62,2.00 L2.79,1.86 L3.08,1.86 L3.53,2.16 L3.90,2.43 L4.05,2.35 L4.20,2.28 L4.35,2.21 L4.51,2.16 L4.67,2.11 L4.75,1.66 L4.85,1.13 L5.05,0.92 L5.27,0.91 L5.50,0.90 L5.73,0.91 L5.95,0.92 L6.15,1.13 L6.25,1.66 L6.33,2.11 L6.49,2.16 L6.65,2.21 L6.80,2.28 L6.95,2.35 L7.10,2.43 L7.47,2.16 L7.92,1.86 L8.21,1.86 L8.38,2.00 L8.54,2.16 L8.70,2.32 L8.84,2.49 L8.84,2.78 L8.54,3.23 L8.27,3.60 L8.35,3.75 L8.42,3.90 L8.49,4.05 L8.54,4.21 L8.59,4.37 L9.04,4.45 L9.57,4.55 L9.78,4.75 L9.79,4.97 L9.80,5.20Z" fill="none" stroke="#f3ac4a" stroke-width="1.1"/><circle cx="5.5" cy="5.2" r="1.3" fill="none" stroke="#f3ac4a" stroke-width="1"/><path d="M2.8,10.8 q2.7,.9 5.4,0" stroke="#f3ac4a" stroke-width=".8" fill="none" opacity=".7"/><path d="M14.20,10.80 L14.20,10.98 L14.18,11.16 L14.02,11.31 L13.58,11.39 L13.21,11.45 L13.18,11.57 L13.13,11.70 L13.08,11.82 L13.03,11.93 L12.97,12.05 L13.19,12.35 L13.43,12.71 L13.44,12.94 L13.33,13.08 L13.20,13.20 L13.08,13.33 L12.94,13.44 L12.71,13.43 L12.35,13.19 L12.05,12.97 L11.93,13.03 L11.82,13.08 L11.70,13.13 L11.57,13.18 L11.45,13.21 L11.39,13.58 L11.31,14.02 L11.16,14.18 L10.98,14.20 L10.80,14.20 L10.62,14.20 L10.44,14.18 L10.29,14.02 L10.21,13.58 L10.15,13.21 L10.03,13.18 L9.90,13.13 L9.78,13.08 L9.67,13.03 L9.55,12.97 L9.25,13.19 L8.89,13.43 L8.66,13.44 L8.52,13.33 L8.40,13.20 L8.27,13.08 L8.16,12.94 L8.17,12.71 L8.41,12.35 L8.63,12.05 L8.57,11.93 L8.52,11.82 L8.47,11.70 L8.42,11.57 L8.39,11.45 L8.02,11.39 L7.58,11.31 L7.42,11.16 L7.40,10.98 L7.40,10.80 L7.40,10.62 L7.42,10.44 L7.58,10.29 L8.02,10.21 L8.39,10.15 L8.42,10.03 L8.47,9.90 L8.52,9.78 L8.57,9.67 L8.63,9.55 L8.41,9.25 L8.17,8.89 L8.16,8.66 L8.27,8.52 L8.40,8.40 L8.52,8.27 L8.66,8.16 L8.89,8.17 L9.25,8.41 L9.55,8.63 L9.67,8.57 L9.78,8.52 L9.90,8.47 L10.03,8.42 L10.15,8.39 L10.21,8.02 L10.29,7.58 L10.44,7.42 L10.62,7.40 L10.80,7.40 L10.98,7.40 L11.16,7.42 L11.31,7.58 L11.39,8.02 L11.45,8.39 L11.57,8.42 L11.70,8.47 L11.82,8.52 L11.93,8.57 L12.05,8.63 L12.35,8.41 L12.71,8.17 L12.94,8.16 L13.08,8.27 L13.20,8.40 L13.33,8.52 L13.44,8.66 L13.43,8.89 L13.19,9.25 L12.97,9.55 L13.03,9.67 L13.08,9.78 L13.13,9.90 L13.18,10.03 L13.21,10.15 L13.58,10.21 L14.02,10.29 L14.18,10.44 L14.20,10.62 L14.20,10.80Z" fill="none" stroke="#c4c4c4" stroke-width="1"/><circle cx="10.8" cy="10.8" r="1" fill="none" stroke="#c4c4c4" stroke-width=".8"/></svg></div><div class="ti" style="left:48px;top:360px">001File---Exit</div>
<div class="ico" style="left:30px;top:379px;width:16px;height:16px;border-color:#555"><svg width="15" height="15" viewBox="0 0 15 15" style="position:absolute;left:0;top:0"><path d="M9.80,5.20 L9.79,5.43 L9.78,5.65 L9.57,5.85 L9.04,5.95 L8.59,6.03 L8.54,6.19 L8.49,6.35 L8.42,6.50 L8.35,6.65 L8.27,6.80 L8.54,7.17 L8.84,7.62 L8.84,7.91 L8.70,8.08 L8.54,8.24 L8.38,8.40 L8.21,8.54 L7.92,8.54 L7.47,8.24 L7.10,7.97 L6.95,8.05 L6.80,8.12 L6.65,8.19 L6.49,8.24 L6.33,8.29 L6.25,8.74 L6.15,9.27 L5.95,9.48 L5.73,9.49 L5.50,9.50 L5.27,9.49 L5.05,9.48 L4.85,9.27 L4.75,8.74 L4.67,8.29 L4.51,8.24 L4.35,8.19 L4.20,8.12 L4.05,8.05 L3.90,7.97 L3.53,8.24 L3.08,8.54 L2.79,8.54 L2.62,8.40 L2.46,8.24 L2.30,8.08 L2.16,7.91 L2.16,7.62 L2.46,7.17 L2.73,6.80 L2.65,6.65 L2.58,6.50 L2.51,6.35 L2.46,6.19 L2.41,6.03 L1.96,5.95 L1.43,5.85 L1.22,5.65 L1.21,5.43 L1.20,5.20 L1.21,4.97 L1.22,4.75 L1.43,4.55 L1.96,4.45 L2.41,4.37 L2.46,4.21 L2.51,4.05 L2.58,3.90 L2.65,3.75 L2.73,3.60 L2.46,3.23 L2.16,2.78 L2.16,2.49 L2.30,2.32 L2.46,2.16 L2.62,2.00 L2.79,1.86 L3.08,1.86 L3.53,2.16 L3.90,2.43 L4.05,2.35 L4.20,2.28 L4.35,2.21 L4.51,2.16 L4.67,2.11 L4.75,1.66 L4.85,1.13 L5.05,0.92 L5.27,0.91 L5.50,0.90 L5.73,0.91 L5.95,0.92 L6.15,1.13 L6.25,1.66 L6.33,2.11 L6.49,2.16 L6.65,2.21 L6.80,2.28 L6.95,2.35 L7.10,2.43 L7.47,2.16 L7.92,1.86 L8.21,1.86 L8.38,2.00 L8.54,2.16 L8.70,2.32 L8.84,2.49 L8.84,2.78 L8.54,3.23 L8.27,3.60 L8.35,3.75 L8.42,3.90 L8.49,4.05 L8.54,4.21 L8.59,4.37 L9.04,4.45 L9.57,4.55 L9.78,4.75 L9.79,4.97 L9.80,5.20Z" fill="none" stroke="#f3ac4a" stroke-width="1.1"/><circle cx="5.5" cy="5.2" r="1.3" fill="none" stroke="#f3ac4a" stroke-width="1"/><path d="M2.8,10.8 q2.7,.9 5.4,0" stroke="#f3ac4a" stroke-width=".8" fill="none" opacity=".7"/><path d="M14.20,10.80 L14.20,10.98 L14.18,11.16 L14.02,11.31 L13.58,11.39 L13.21,11.45 L13.18,11.57 L13.13,11.70 L13.08,11.82 L13.03,11.93 L12.97,12.05 L13.19,12.35 L13.43,12.71 L13.44,12.94 L13.33,13.08 L13.20,13.20 L13.08,13.33 L12.94,13.44 L12.71,13.43 L12.35,13.19 L12.05,12.97 L11.93,13.03 L11.82,13.08 L11.70,13.13 L11.57,13.18 L11.45,13.21 L11.39,13.58 L11.31,14.02 L11.16,14.18 L10.98,14.20 L10.80,14.20 L10.62,14.20 L10.44,14.18 L10.29,14.02 L10.21,13.58 L10.15,13.21 L10.03,13.18 L9.90,13.13 L9.78,13.08 L9.67,13.03 L9.55,12.97 L9.25,13.19 L8.89,13.43 L8.66,13.44 L8.52,13.33 L8.40,13.20 L8.27,13.08 L8.16,12.94 L8.17,12.71 L8.41,12.35 L8.63,12.05 L8.57,11.93 L8.52,11.82 L8.47,11.70 L8.42,11.57 L8.39,11.45 L8.02,11.39 L7.58,11.31 L7.42,11.16 L7.40,10.98 L7.40,10.80 L7.40,10.62 L7.42,10.44 L7.58,10.29 L8.02,10.21 L8.39,10.15 L8.42,10.03 L8.47,9.90 L8.52,9.78 L8.57,9.67 L8.63,9.55 L8.41,9.25 L8.17,8.89 L8.16,8.66 L8.27,8.52 L8.40,8.40 L8.52,8.27 L8.66,8.16 L8.89,8.17 L9.25,8.41 L9.55,8.63 L9.67,8.57 L9.78,8.52 L9.90,8.47 L10.03,8.42 L10.15,8.39 L10.21,8.02 L10.29,7.58 L10.44,7.42 L10.62,7.40 L10.80,7.40 L10.98,7.40 L11.16,7.42 L11.31,7.58 L11.39,8.02 L11.45,8.39 L11.57,8.42 L11.70,8.47 L11.82,8.52 L11.93,8.57 L12.05,8.63 L12.35,8.41 L12.71,8.17 L12.94,8.16 L13.08,8.27 L13.20,8.40 L13.33,8.52 L13.44,8.66 L13.43,8.89 L13.19,9.25 L12.97,9.55 L13.03,9.67 L13.08,9.78 L13.13,9.90 L13.18,10.03 L13.21,10.15 L13.58,10.21 L14.02,10.29 L14.18,10.44 L14.20,10.62 L14.20,10.80Z" fill="none" stroke="#c4c4c4" stroke-width="1"/><circle cx="10.8" cy="10.8" r="1" fill="none" stroke="#c4c4c4" stroke-width=".8"/></svg></div><div class="ti" style="left:48px;top:381px">99999AutoForms---FindAndAddCar</div>
<div class="ico" style="left:30px;top:400px;width:16px;height:16px;border-color:#555"><svg width="15" height="15" viewBox="0 0 15 15" style="position:absolute;left:0;top:0"><path d="M9.80,5.20 L9.79,5.43 L9.78,5.65 L9.57,5.85 L9.04,5.95 L8.59,6.03 L8.54,6.19 L8.49,6.35 L8.42,6.50 L8.35,6.65 L8.27,6.80 L8.54,7.17 L8.84,7.62 L8.84,7.91 L8.70,8.08 L8.54,8.24 L8.38,8.40 L8.21,8.54 L7.92,8.54 L7.47,8.24 L7.10,7.97 L6.95,8.05 L6.80,8.12 L6.65,8.19 L6.49,8.24 L6.33,8.29 L6.25,8.74 L6.15,9.27 L5.95,9.48 L5.73,9.49 L5.50,9.50 L5.27,9.49 L5.05,9.48 L4.85,9.27 L4.75,8.74 L4.67,8.29 L4.51,8.24 L4.35,8.19 L4.20,8.12 L4.05,8.05 L3.90,7.97 L3.53,8.24 L3.08,8.54 L2.79,8.54 L2.62,8.40 L2.46,8.24 L2.30,8.08 L2.16,7.91 L2.16,7.62 L2.46,7.17 L2.73,6.80 L2.65,6.65 L2.58,6.50 L2.51,6.35 L2.46,6.19 L2.41,6.03 L1.96,5.95 L1.43,5.85 L1.22,5.65 L1.21,5.43 L1.20,5.20 L1.21,4.97 L1.22,4.75 L1.43,4.55 L1.96,4.45 L2.41,4.37 L2.46,4.21 L2.51,4.05 L2.58,3.90 L2.65,3.75 L2.73,3.60 L2.46,3.23 L2.16,2.78 L2.16,2.49 L2.30,2.32 L2.46,2.16 L2.62,2.00 L2.79,1.86 L3.08,1.86 L3.53,2.16 L3.90,2.43 L4.05,2.35 L4.20,2.28 L4.35,2.21 L4.51,2.16 L4.67,2.11 L4.75,1.66 L4.85,1.13 L5.05,0.92 L5.27,0.91 L5.50,0.90 L5.73,0.91 L5.95,0.92 L6.15,1.13 L6.25,1.66 L6.33,2.11 L6.49,2.16 L6.65,2.21 L6.80,2.28 L6.95,2.35 L7.10,2.43 L7.47,2.16 L7.92,1.86 L8.21,1.86 L8.38,2.00 L8.54,2.16 L8.70,2.32 L8.84,2.49 L8.84,2.78 L8.54,3.23 L8.27,3.60 L8.35,3.75 L8.42,3.90 L8.49,4.05 L8.54,4.21 L8.59,4.37 L9.04,4.45 L9.57,4.55 L9.78,4.75 L9.79,4.97 L9.80,5.20Z" fill="none" stroke="#f3ac4a" stroke-width="1.1"/><circle cx="5.5" cy="5.2" r="1.3" fill="none" stroke="#f3ac4a" stroke-width="1"/><path d="M2.8,10.8 q2.7,.9 5.4,0" stroke="#f3ac4a" stroke-width=".8" fill="none" opacity=".7"/><path d="M14.20,10.80 L14.20,10.98 L14.18,11.16 L14.02,11.31 L13.58,11.39 L13.21,11.45 L13.18,11.57 L13.13,11.70 L13.08,11.82 L13.03,11.93 L12.97,12.05 L13.19,12.35 L13.43,12.71 L13.44,12.94 L13.33,13.08 L13.20,13.20 L13.08,13.33 L12.94,13.44 L12.71,13.43 L12.35,13.19 L12.05,12.97 L11.93,13.03 L11.82,13.08 L11.70,13.13 L11.57,13.18 L11.45,13.21 L11.39,13.58 L11.31,14.02 L11.16,14.18 L10.98,14.20 L10.80,14.20 L10.62,14.20 L10.44,14.18 L10.29,14.02 L10.21,13.58 L10.15,13.21 L10.03,13.18 L9.90,13.13 L9.78,13.08 L9.67,13.03 L9.55,12.97 L9.25,13.19 L8.89,13.43 L8.66,13.44 L8.52,13.33 L8.40,13.20 L8.27,13.08 L8.16,12.94 L8.17,12.71 L8.41,12.35 L8.63,12.05 L8.57,11.93 L8.52,11.82 L8.47,11.70 L8.42,11.57 L8.39,11.45 L8.02,11.39 L7.58,11.31 L7.42,11.16 L7.40,10.98 L7.40,10.80 L7.40,10.62 L7.42,10.44 L7.58,10.29 L8.02,10.21 L8.39,10.15 L8.42,10.03 L8.47,9.90 L8.52,9.78 L8.57,9.67 L8.63,9.55 L8.41,9.25 L8.17,8.89 L8.16,8.66 L8.27,8.52 L8.40,8.40 L8.52,8.27 L8.66,8.16 L8.89,8.17 L9.25,8.41 L9.55,8.63 L9.67,8.57 L9.78,8.52 L9.90,8.47 L10.03,8.42 L10.15,8.39 L10.21,8.02 L10.29,7.58 L10.44,7.42 L10.62,7.40 L10.80,7.40 L10.98,7.40 L11.16,7.42 L11.31,7.58 L11.39,8.02 L11.45,8.39 L11.57,8.42 L11.70,8.47 L11.82,8.52 L11.93,8.57 L12.05,8.63 L12.35,8.41 L12.71,8.17 L12.94,8.16 L13.08,8.27 L13.20,8.40 L13.33,8.52 L13.44,8.66 L13.43,8.89 L13.19,9.25 L12.97,9.55 L13.03,9.67 L13.08,9.78 L13.13,9.90 L13.18,10.03 L13.21,10.15 L13.58,10.21 L14.02,10.29 L14.18,10.44 L14.20,10.62 L14.20,10.80Z" fill="none" stroke="#c4c4c4" stroke-width="1"/><circle cx="10.8" cy="10.8" r="1" fill="none" stroke="#c4c4c4" stroke-width=".8"/></svg></div><div class="ti" style="left:48px;top:402px">99999AutoForms---FindAndAddCar</div>
<div class="ico" style="left:30px;top:421px;width:16px;height:16px;border-color:#555"><svg width="15" height="15" viewBox="0 0 15 15" style="position:absolute;left:0;top:0"><path d="M9.80,5.20 L9.79,5.43 L9.78,5.65 L9.57,5.85 L9.04,5.95 L8.59,6.03 L8.54,6.19 L8.49,6.35 L8.42,6.50 L8.35,6.65 L8.27,6.80 L8.54,7.17 L8.84,7.62 L8.84,7.91 L8.70,8.08 L8.54,8.24 L8.38,8.40 L8.21,8.54 L7.92,8.54 L7.47,8.24 L7.10,7.97 L6.95,8.05 L6.80,8.12 L6.65,8.19 L6.49,8.24 L6.33,8.29 L6.25,8.74 L6.15,9.27 L5.95,9.48 L5.73,9.49 L5.50,9.50 L5.27,9.49 L5.05,9.48 L4.85,9.27 L4.75,8.74 L4.67,8.29 L4.51,8.24 L4.35,8.19 L4.20,8.12 L4.05,8.05 L3.90,7.97 L3.53,8.24 L3.08,8.54 L2.79,8.54 L2.62,8.40 L2.46,8.24 L2.30,8.08 L2.16,7.91 L2.16,7.62 L2.46,7.17 L2.73,6.80 L2.65,6.65 L2.58,6.50 L2.51,6.35 L2.46,6.19 L2.41,6.03 L1.96,5.95 L1.43,5.85 L1.22,5.65 L1.21,5.43 L1.20,5.20 L1.21,4.97 L1.22,4.75 L1.43,4.55 L1.96,4.45 L2.41,4.37 L2.46,4.21 L2.51,4.05 L2.58,3.90 L2.65,3.75 L2.73,3.60 L2.46,3.23 L2.16,2.78 L2.16,2.49 L2.30,2.32 L2.46,2.16 L2.62,2.00 L2.79,1.86 L3.08,1.86 L3.53,2.16 L3.90,2.43 L4.05,2.35 L4.20,2.28 L4.35,2.21 L4.51,2.16 L4.67,2.11 L4.75,1.66 L4.85,1.13 L5.05,0.92 L5.27,0.91 L5.50,0.90 L5.73,0.91 L5.95,0.92 L6.15,1.13 L6.25,1.66 L6.33,2.11 L6.49,2.16 L6.65,2.21 L6.80,2.28 L6.95,2.35 L7.10,2.43 L7.47,2.16 L7.92,1.86 L8.21,1.86 L8.38,2.00 L8.54,2.16 L8.70,2.32 L8.84,2.49 L8.84,2.78 L8.54,3.23 L8.27,3.60 L8.35,3.75 L8.42,3.90 L8.49,4.05 L8.54,4.21 L8.59,4.37 L9.04,4.45 L9.57,4.55 L9.78,4.75 L9.79,4.97 L9.80,5.20Z" fill="none" stroke="#f3ac4a" stroke-width="1.1"/><circle cx="5.5" cy="5.2" r="1.3" fill="none" stroke="#f3ac4a" stroke-width="1"/><path d="M2.8,10.8 q2.7,.9 5.4,0" stroke="#f3ac4a" stroke-width=".8" fill="none" opacity=".7"/><path d="M14.20,10.80 L14.20,10.98 L14.18,11.16 L14.02,11.31 L13.58,11.39 L13.21,11.45 L13.18,11.57 L13.13,11.70 L13.08,11.82 L13.03,11.93 L12.97,12.05 L13.19,12.35 L13.43,12.71 L13.44,12.94 L13.33,13.08 L13.20,13.20 L13.08,13.33 L12.94,13.44 L12.71,13.43 L12.35,13.19 L12.05,12.97 L11.93,13.03 L11.82,13.08 L11.70,13.13 L11.57,13.18 L11.45,13.21 L11.39,13.58 L11.31,14.02 L11.16,14.18 L10.98,14.20 L10.80,14.20 L10.62,14.20 L10.44,14.18 L10.29,14.02 L10.21,13.58 L10.15,13.21 L10.03,13.18 L9.90,13.13 L9.78,13.08 L9.67,13.03 L9.55,12.97 L9.25,13.19 L8.89,13.43 L8.66,13.44 L8.52,13.33 L8.40,13.20 L8.27,13.08 L8.16,12.94 L8.17,12.71 L8.41,12.35 L8.63,12.05 L8.57,11.93 L8.52,11.82 L8.47,11.70 L8.42,11.57 L8.39,11.45 L8.02,11.39 L7.58,11.31 L7.42,11.16 L7.40,10.98 L7.40,10.80 L7.40,10.62 L7.42,10.44 L7.58,10.29 L8.02,10.21 L8.39,10.15 L8.42,10.03 L8.47,9.90 L8.52,9.78 L8.57,9.67 L8.63,9.55 L8.41,9.25 L8.17,8.89 L8.16,8.66 L8.27,8.52 L8.40,8.40 L8.52,8.27 L8.66,8.16 L8.89,8.17 L9.25,8.41 L9.55,8.63 L9.67,8.57 L9.78,8.52 L9.90,8.47 L10.03,8.42 L10.15,8.39 L10.21,8.02 L10.29,7.58 L10.44,7.42 L10.62,7.40 L10.80,7.40 L10.98,7.40 L11.16,7.42 L11.31,7.58 L11.39,8.02 L11.45,8.39 L11.57,8.42 L11.70,8.47 L11.82,8.52 L11.93,8.57 L12.05,8.63 L12.35,8.41 L12.71,8.17 L12.94,8.16 L13.08,8.27 L13.20,8.40 L13.33,8.52 L13.44,8.66 L13.43,8.89 L13.19,9.25 L12.97,9.55 L13.03,9.67 L13.08,9.78 L13.13,9.90 L13.18,10.03 L13.21,10.15 L13.58,10.21 L14.02,10.29 L14.18,10.44 L14.20,10.62 L14.20,10.80Z" fill="none" stroke="#c4c4c4" stroke-width="1"/><circle cx="10.8" cy="10.8" r="1" fill="none" stroke="#c4c4c4" stroke-width=".8"/></svg></div><div class="ti" style="left:48px;top:423px">99999AutoForms---MultiLinkCars</div>
<div class="ico" style="left:30px;top:442px;width:16px;height:16px;border-color:#555"><svg width="15" height="15" viewBox="0 0 15 15" style="position:absolute;left:0;top:0"><path d="M9.80,5.20 L9.79,5.43 L9.78,5.65 L9.57,5.85 L9.04,5.95 L8.59,6.03 L8.54,6.19 L8.49,6.35 L8.42,6.50 L8.35,6.65 L8.27,6.80 L8.54,7.17 L8.84,7.62 L8.84,7.91 L8.70,8.08 L8.54,8.24 L8.38,8.40 L8.21,8.54 L7.92,8.54 L7.47,8.24 L7.10,7.97 L6.95,8.05 L6.80,8.12 L6.65,8.19 L6.49,8.24 L6.33,8.29 L6.25,8.74 L6.15,9.27 L5.95,9.48 L5.73,9.49 L5.50,9.50 L5.27,9.49 L5.05,9.48 L4.85,9.27 L4.75,8.74 L4.67,8.29 L4.51,8.24 L4.35,8.19 L4.20,8.12 L4.05,8.05 L3.90,7.97 L3.53,8.24 L3.08,8.54 L2.79,8.54 L2.62,8.40 L2.46,8.24 L2.30,8.08 L2.16,7.91 L2.16,7.62 L2.46,7.17 L2.73,6.80 L2.65,6.65 L2.58,6.50 L2.51,6.35 L2.46,6.19 L2.41,6.03 L1.96,5.95 L1.43,5.85 L1.22,5.65 L1.21,5.43 L1.20,5.20 L1.21,4.97 L1.22,4.75 L1.43,4.55 L1.96,4.45 L2.41,4.37 L2.46,4.21 L2.51,4.05 L2.58,3.90 L2.65,3.75 L2.73,3.60 L2.46,3.23 L2.16,2.78 L2.16,2.49 L2.30,2.32 L2.46,2.16 L2.62,2.00 L2.79,1.86 L3.08,1.86 L3.53,2.16 L3.90,2.43 L4.05,2.35 L4.20,2.28 L4.35,2.21 L4.51,2.16 L4.67,2.11 L4.75,1.66 L4.85,1.13 L5.05,0.92 L5.27,0.91 L5.50,0.90 L5.73,0.91 L5.95,0.92 L6.15,1.13 L6.25,1.66 L6.33,2.11 L6.49,2.16 L6.65,2.21 L6.80,2.28 L6.95,2.35 L7.10,2.43 L7.47,2.16 L7.92,1.86 L8.21,1.86 L8.38,2.00 L8.54,2.16 L8.70,2.32 L8.84,2.49 L8.84,2.78 L8.54,3.23 L8.27,3.60 L8.35,3.75 L8.42,3.90 L8.49,4.05 L8.54,4.21 L8.59,4.37 L9.04,4.45 L9.57,4.55 L9.78,4.75 L9.79,4.97 L9.80,5.20Z" fill="none" stroke="#f3ac4a" stroke-width="1.1"/><circle cx="5.5" cy="5.2" r="1.3" fill="none" stroke="#f3ac4a" stroke-width="1"/><path d="M2.8,10.8 q2.7,.9 5.4,0" stroke="#f3ac4a" stroke-width=".8" fill="none" opacity=".7"/><path d="M14.20,10.80 L14.20,10.98 L14.18,11.16 L14.02,11.31 L13.58,11.39 L13.21,11.45 L13.18,11.57 L13.13,11.70 L13.08,11.82 L13.03,11.93 L12.97,12.05 L13.19,12.35 L13.43,12.71 L13.44,12.94 L13.33,13.08 L13.20,13.20 L13.08,13.33 L12.94,13.44 L12.71,13.43 L12.35,13.19 L12.05,12.97 L11.93,13.03 L11.82,13.08 L11.70,13.13 L11.57,13.18 L11.45,13.21 L11.39,13.58 L11.31,14.02 L11.16,14.18 L10.98,14.20 L10.80,14.20 L10.62,14.20 L10.44,14.18 L10.29,14.02 L10.21,13.58 L10.15,13.21 L10.03,13.18 L9.90,13.13 L9.78,13.08 L9.67,13.03 L9.55,12.97 L9.25,13.19 L8.89,13.43 L8.66,13.44 L8.52,13.33 L8.40,13.20 L8.27,13.08 L8.16,12.94 L8.17,12.71 L8.41,12.35 L8.63,12.05 L8.57,11.93 L8.52,11.82 L8.47,11.70 L8.42,11.57 L8.39,11.45 L8.02,11.39 L7.58,11.31 L7.42,11.16 L7.40,10.98 L7.40,10.80 L7.40,10.62 L7.42,10.44 L7.58,10.29 L8.02,10.21 L8.39,10.15 L8.42,10.03 L8.47,9.90 L8.52,9.78 L8.57,9.67 L8.63,9.55 L8.41,9.25 L8.17,8.89 L8.16,8.66 L8.27,8.52 L8.40,8.40 L8.52,8.27 L8.66,8.16 L8.89,8.17 L9.25,8.41 L9.55,8.63 L9.67,8.57 L9.78,8.52 L9.90,8.47 L10.03,8.42 L10.15,8.39 L10.21,8.02 L10.29,7.58 L10.44,7.42 L10.62,7.40 L10.80,7.40 L10.98,7.40 L11.16,7.42 L11.31,7.58 L11.39,8.02 L11.45,8.39 L11.57,8.42 L11.70,8.47 L11.82,8.52 L11.93,8.57 L12.05,8.63 L12.35,8.41 L12.71,8.17 L12.94,8.16 L13.08,8.27 L13.20,8.40 L13.33,8.52 L13.44,8.66 L13.43,8.89 L13.19,9.25 L12.97,9.55 L13.03,9.67 L13.08,9.78 L13.13,9.90 L13.18,10.03 L13.21,10.15 L13.58,10.21 L14.02,10.29 L14.18,10.44 L14.20,10.62 L14.20,10.80Z" fill="none" stroke="#c4c4c4" stroke-width="1"/><circle cx="10.8" cy="10.8" r="1" fill="none" stroke="#c4c4c4" stroke-width=".8"/></svg></div><div class="ti" style="left:48px;top:444px">---MultiLinkCarsIUsedToOwn</div>
<div class="ico" style="left:30px;top:463px;width:16px;height:16px;border-color:#555"><svg width="15" height="15" viewBox="0 0 15 15" style="position:absolute;left:0;top:0"><path d="M9.80,5.20 L9.79,5.43 L9.78,5.65 L9.57,5.85 L9.04,5.95 L8.59,6.03 L8.54,6.19 L8.49,6.35 L8.42,6.50 L8.35,6.65 L8.27,6.80 L8.54,7.17 L8.84,7.62 L8.84,7.91 L8.70,8.08 L8.54,8.24 L8.38,8.40 L8.21,8.54 L7.92,8.54 L7.47,8.24 L7.10,7.97 L6.95,8.05 L6.80,8.12 L6.65,8.19 L6.49,8.24 L6.33,8.29 L6.25,8.74 L6.15,9.27 L5.95,9.48 L5.73,9.49 L5.50,9.50 L5.27,9.49 L5.05,9.48 L4.85,9.27 L4.75,8.74 L4.67,8.29 L4.51,8.24 L4.35,8.19 L4.20,8.12 L4.05,8.05 L3.90,7.97 L3.53,8.24 L3.08,8.54 L2.79,8.54 L2.62,8.40 L2.46,8.24 L2.30,8.08 L2.16,7.91 L2.16,7.62 L2.46,7.17 L2.73,6.80 L2.65,6.65 L2.58,6.50 L2.51,6.35 L2.46,6.19 L2.41,6.03 L1.96,5.95 L1.43,5.85 L1.22,5.65 L1.21,5.43 L1.20,5.20 L1.21,4.97 L1.22,4.75 L1.43,4.55 L1.96,4.45 L2.41,4.37 L2.46,4.21 L2.51,4.05 L2.58,3.90 L2.65,3.75 L2.73,3.60 L2.46,3.23 L2.16,2.78 L2.16,2.49 L2.30,2.32 L2.46,2.16 L2.62,2.00 L2.79,1.86 L3.08,1.86 L3.53,2.16 L3.90,2.43 L4.05,2.35 L4.20,2.28 L4.35,2.21 L4.51,2.16 L4.67,2.11 L4.75,1.66 L4.85,1.13 L5.05,0.92 L5.27,0.91 L5.50,0.90 L5.73,0.91 L5.95,0.92 L6.15,1.13 L6.25,1.66 L6.33,2.11 L6.49,2.16 L6.65,2.21 L6.80,2.28 L6.95,2.35 L7.10,2.43 L7.47,2.16 L7.92,1.86 L8.21,1.86 L8.38,2.00 L8.54,2.16 L8.70,2.32 L8.84,2.49 L8.84,2.78 L8.54,3.23 L8.27,3.60 L8.35,3.75 L8.42,3.90 L8.49,4.05 L8.54,4.21 L8.59,4.37 L9.04,4.45 L9.57,4.55 L9.78,4.75 L9.79,4.97 L9.80,5.20Z" fill="none" stroke="#f3ac4a" stroke-width="1.1"/><circle cx="5.5" cy="5.2" r="1.3" fill="none" stroke="#f3ac4a" stroke-width="1"/><path d="M2.8,10.8 q2.7,.9 5.4,0" stroke="#f3ac4a" stroke-width=".8" fill="none" opacity=".7"/><path d="M14.20,10.80 L14.20,10.98 L14.18,11.16 L14.02,11.31 L13.58,11.39 L13.21,11.45 L13.18,11.57 L13.13,11.70 L13.08,11.82 L13.03,11.93 L12.97,12.05 L13.19,12.35 L13.43,12.71 L13.44,12.94 L13.33,13.08 L13.20,13.20 L13.08,13.33 L12.94,13.44 L12.71,13.43 L12.35,13.19 L12.05,12.97 L11.93,13.03 L11.82,13.08 L11.70,13.13 L11.57,13.18 L11.45,13.21 L11.39,13.58 L11.31,14.02 L11.16,14.18 L10.98,14.20 L10.80,14.20 L10.62,14.20 L10.44,14.18 L10.29,14.02 L10.21,13.58 L10.15,13.21 L10.03,13.18 L9.90,13.13 L9.78,13.08 L9.67,13.03 L9.55,12.97 L9.25,13.19 L8.89,13.43 L8.66,13.44 L8.52,13.33 L8.40,13.20 L8.27,13.08 L8.16,12.94 L8.17,12.71 L8.41,12.35 L8.63,12.05 L8.57,11.93 L8.52,11.82 L8.47,11.70 L8.42,11.57 L8.39,11.45 L8.02,11.39 L7.58,11.31 L7.42,11.16 L7.40,10.98 L7.40,10.80 L7.40,10.62 L7.42,10.44 L7.58,10.29 L8.02,10.21 L8.39,10.15 L8.42,10.03 L8.47,9.90 L8.52,9.78 L8.57,9.67 L8.63,9.55 L8.41,9.25 L8.17,8.89 L8.16,8.66 L8.27,8.52 L8.40,8.40 L8.52,8.27 L8.66,8.16 L8.89,8.17 L9.25,8.41 L9.55,8.63 L9.67,8.57 L9.78,8.52 L9.90,8.47 L10.03,8.42 L10.15,8.39 L10.21,8.02 L10.29,7.58 L10.44,7.42 L10.62,7.40 L10.80,7.40 L10.98,7.40 L11.16,7.42 L11.31,7.58 L11.39,8.02 L11.45,8.39 L11.57,8.42 L11.70,8.47 L11.82,8.52 L11.93,8.57 L12.05,8.63 L12.35,8.41 L12.71,8.17 L12.94,8.16 L13.08,8.27 L13.20,8.40 L13.33,8.52 L13.44,8.66 L13.43,8.89 L13.19,9.25 L12.97,9.55 L13.03,9.67 L13.08,9.78 L13.13,9.90 L13.18,10.03 L13.21,10.15 L13.58,10.21 L14.02,10.29 L14.18,10.44 L14.20,10.62 L14.20,10.80Z" fill="none" stroke="#c4c4c4" stroke-width="1"/><circle cx="10.8" cy="10.8" r="1" fill="none" stroke="#c4c4c4" stroke-width=".8"/></svg></div><div class="ti" style="left:48px;top:465px">99999AutoForms---MultiLinkCarsIUsedToO</div>
<div class="ico" style="left:30px;top:484px;width:16px;height:16px;border-color:#555"><svg width="15" height="15" viewBox="0 0 15 15" style="position:absolute;left:0;top:0"><path d="M9.80,5.20 L9.79,5.43 L9.78,5.65 L9.57,5.85 L9.04,5.95 L8.59,6.03 L8.54,6.19 L8.49,6.35 L8.42,6.50 L8.35,6.65 L8.27,6.80 L8.54,7.17 L8.84,7.62 L8.84,7.91 L8.70,8.08 L8.54,8.24 L8.38,8.40 L8.21,8.54 L7.92,8.54 L7.47,8.24 L7.10,7.97 L6.95,8.05 L6.80,8.12 L6.65,8.19 L6.49,8.24 L6.33,8.29 L6.25,8.74 L6.15,9.27 L5.95,9.48 L5.73,9.49 L5.50,9.50 L5.27,9.49 L5.05,9.48 L4.85,9.27 L4.75,8.74 L4.67,8.29 L4.51,8.24 L4.35,8.19 L4.20,8.12 L4.05,8.05 L3.90,7.97 L3.53,8.24 L3.08,8.54 L2.79,8.54 L2.62,8.40 L2.46,8.24 L2.30,8.08 L2.16,7.91 L2.16,7.62 L2.46,7.17 L2.73,6.80 L2.65,6.65 L2.58,6.50 L2.51,6.35 L2.46,6.19 L2.41,6.03 L1.96,5.95 L1.43,5.85 L1.22,5.65 L1.21,5.43 L1.20,5.20 L1.21,4.97 L1.22,4.75 L1.43,4.55 L1.96,4.45 L2.41,4.37 L2.46,4.21 L2.51,4.05 L2.58,3.90 L2.65,3.75 L2.73,3.60 L2.46,3.23 L2.16,2.78 L2.16,2.49 L2.30,2.32 L2.46,2.16 L2.62,2.00 L2.79,1.86 L3.08,1.86 L3.53,2.16 L3.90,2.43 L4.05,2.35 L4.20,2.28 L4.35,2.21 L4.51,2.16 L4.67,2.11 L4.75,1.66 L4.85,1.13 L5.05,0.92 L5.27,0.91 L5.50,0.90 L5.73,0.91 L5.95,0.92 L6.15,1.13 L6.25,1.66 L6.33,2.11 L6.49,2.16 L6.65,2.21 L6.80,2.28 L6.95,2.35 L7.10,2.43 L7.47,2.16 L7.92,1.86 L8.21,1.86 L8.38,2.00 L8.54,2.16 L8.70,2.32 L8.84,2.49 L8.84,2.78 L8.54,3.23 L8.27,3.60 L8.35,3.75 L8.42,3.90 L8.49,4.05 L8.54,4.21 L8.59,4.37 L9.04,4.45 L9.57,4.55 L9.78,4.75 L9.79,4.97 L9.80,5.20Z" fill="none" stroke="#f3ac4a" stroke-width="1.1"/><circle cx="5.5" cy="5.2" r="1.3" fill="none" stroke="#f3ac4a" stroke-width="1"/><path d="M2.8,10.8 q2.7,.9 5.4,0" stroke="#f3ac4a" stroke-width=".8" fill="none" opacity=".7"/><path d="M14.20,10.80 L14.20,10.98 L14.18,11.16 L14.02,11.31 L13.58,11.39 L13.21,11.45 L13.18,11.57 L13.13,11.70 L13.08,11.82 L13.03,11.93 L12.97,12.05 L13.19,12.35 L13.43,12.71 L13.44,12.94 L13.33,13.08 L13.20,13.20 L13.08,13.33 L12.94,13.44 L12.71,13.43 L12.35,13.19 L12.05,12.97 L11.93,13.03 L11.82,13.08 L11.70,13.13 L11.57,13.18 L11.45,13.21 L11.39,13.58 L11.31,14.02 L11.16,14.18 L10.98,14.20 L10.80,14.20 L10.62,14.20 L10.44,14.18 L10.29,14.02 L10.21,13.58 L10.15,13.21 L10.03,13.18 L9.90,13.13 L9.78,13.08 L9.67,13.03 L9.55,12.97 L9.25,13.19 L8.89,13.43 L8.66,13.44 L8.52,13.33 L8.40,13.20 L8.27,13.08 L8.16,12.94 L8.17,12.71 L8.41,12.35 L8.63,12.05 L8.57,11.93 L8.52,11.82 L8.47,11.70 L8.42,11.57 L8.39,11.45 L8.02,11.39 L7.58,11.31 L7.42,11.16 L7.40,10.98 L7.40,10.80 L7.40,10.62 L7.42,10.44 L7.58,10.29 L8.02,10.21 L8.39,10.15 L8.42,10.03 L8.47,9.90 L8.52,9.78 L8.57,9.67 L8.63,9.55 L8.41,9.25 L8.17,8.89 L8.16,8.66 L8.27,8.52 L8.40,8.40 L8.52,8.27 L8.66,8.16 L8.89,8.17 L9.25,8.41 L9.55,8.63 L9.67,8.57 L9.78,8.52 L9.90,8.47 L10.03,8.42 L10.15,8.39 L10.21,8.02 L10.29,7.58 L10.44,7.42 L10.62,7.40 L10.80,7.40 L10.98,7.40 L11.16,7.42 L11.31,7.58 L11.39,8.02 L11.45,8.39 L11.57,8.42 L11.70,8.47 L11.82,8.52 L11.93,8.57 L12.05,8.63 L12.35,8.41 L12.71,8.17 L12.94,8.16 L13.08,8.27 L13.20,8.40 L13.33,8.52 L13.44,8.66 L13.43,8.89 L13.19,9.25 L12.97,9.55 L13.03,9.67 L13.08,9.78 L13.13,9.90 L13.18,10.03 L13.21,10.15 L13.58,10.21 L14.02,10.29 L14.18,10.44 L14.20,10.62 L14.20,10.80Z" fill="none" stroke="#c4c4c4" stroke-width="1"/><circle cx="10.8" cy="10.8" r="1" fill="none" stroke="#c4c4c4" stroke-width=".8"/></svg></div><div class="ti" style="left:48px;top:486px">99999AutoForms---NewBrandOfCar</div>
</div>
<div class="a" style="left:1902px;top:89px;width:16px;height:502px;background:#f0f0f0"></div><div class="a" style="left:1902px;top:106px;width:16px;height:269px;background:#cdcdcd"></div><svg class="a" style="left:1902px;top:89px" width="16" height="17"><path d="M4.5,10.5 L8,7 L11.5,10.5" fill="none" stroke="#606060" stroke-width="1.6"/></svg><svg class="a" style="left:1902px;top:574px" width="16" height="17"><path d="M4.5,7 L8,10.5 L11.5,7" fill="none" stroke="#606060" stroke-width="1.6"/></svg>
<svg class="a" style="left:1895px;top:52px" width="18" height="18"><circle cx="11" cy="6.5" r="3.8" fill="none" stroke="#606060" stroke-width="1.8"/><path d="M8.3,9.2 L3.5,14" stroke="#606060" stroke-width="2.6" stroke-linecap="round"/></svg>
<div class="a" style="left:1369px;top:591px;width:551px;height:31px;background:#f0f0f0"></div><div class="a" style="left:1382px;top:598px;width:11px;height:21px;background:#cce4f7;border:1px solid #99d1ff;border-left:none"></div><svg class="a" style="left:1382px;top:600px" width="12" height="17"><path d="M1,3 H3 M5,3 H10 M1,7 H3 M5,7 H10 M1,11 H3 M5,11 H10 M1,14.5 H3 M5,14.5 H10" stroke="#6a8faa" stroke-width="1"/></svg><svg class="a" style="left:1395px;top:599px" width="18" height="19"><text x="1" y="8.5" font-family="Liberation Serif" font-size="10" fill="#2a4fc0">A</text><text x="1.2" y="17" font-family="Liberation Serif" font-weight="bold" font-size="10" fill="#a02a2a">Z</text><path d="M13,2 V15.5 M10.5,13 L13,16 L15.5,13" fill="none" stroke="#000" stroke-width="1.2"/></svg><div class="a" style="left:1418px;top:599px;width:1px;height:21px;background:#8c8c8c"></div><svg class="a" style="left:1425px;top:601px" width="17" height="16"><rect x=".5" y=".5" width="15" height="14" fill="#e6e6e6" stroke="#b0b0b0"/><rect x="2.5" y="4.5" width="11" height="8" fill="#f4f4f4" stroke="#bdbdbd"/><path d="M4,8 H5 M6,10 H11" stroke="#aaa"/></svg>
<div class="a" style="left:1369px;top:622px;width:551px;height:464px;background:#fff;border:1px solid #a0a0a0;border-left:none"></div><div class="a" style="left:1369px;top:623px;width:550px;height:18px;background:#f0f0f0"></div><div class="a" style="left:1394px;top:626px;font-size:11.4px;font-weight:bold;color:#333">Diagram</div>
<div class="a" style="left:1369px;top:641px;width:21px;height:18px;background:#f0f0f0"></div><div class="a" style="left:1390px;top:641px;width:241px;height:18px;background:#fff;border-bottom:1px solid #f0f0f0"></div><div class="a" style="left:1632px;top:641px;width:287px;height:18px;background:#fff;border-bottom:1px solid #f0f0f0"></div><div class="a" style="left:1394px;top:644px;font-size:11.4px;color:#333">ColorOnNew</div><div class="a" style="left:1633px;top:644px;width:20px;height:14px;border:1px solid #222;background:#fff"></div><div class="a" style="left:1661px;top:644px;font-size:11.4px;color:#333">0, 0, 0, 0</div>
<div class="a" style="left:1369px;top:659px;width:21px;height:18px;background:#f0f0f0"></div><div class="a" style="left:1390px;top:659px;width:241px;height:18px;background:#fff;border-bottom:1px solid #f0f0f0"></div><div class="a" style="left:1632px;top:659px;width:287px;height:18px;background:#fff;border-bottom:1px solid #f0f0f0"></div><div class="a" style="left:1394px;top:662px;font-size:11.4px;color:#333">CorrectLinesOnMove</div><div class="a" style="left:1635px;top:662px;font-size:11.4px;color:#333">True</div>
<div class="a" style="left:1369px;top:677px;width:21px;height:18px;background:#f0f0f0"></div><div class="a" style="left:1390px;top:677px;width:241px;height:18px;background:#fff;border-bottom:1px solid #f0f0f0"></div><div class="a" style="left:1632px;top:677px;width:287px;height:18px;background:#fff;border-bottom:1px solid #f0f0f0"></div><div class="a" style="left:1394px;top:680px;font-size:11.4px;color:#333">ShowAssociationNames</div><div class="a" style="left:1635px;top:680px;font-size:11.4px;color:#333">DimDefaults</div>
<div class="a" style="left:1369px;top:695px;width:21px;height:18px;background:#f0f0f0"></div><div class="a" style="left:1390px;top:695px;width:241px;height:18px;background:#fff;border-bottom:1px solid #f0f0f0"></div><div class="a" style="left:1632px;top:695px;width:287px;height:18px;background:#fff;border-bottom:1px solid #f0f0f0"></div><div class="a" style="left:1394px;top:698px;font-size:11.4px;color:#333">ShowMethodReturnTypes</div><div class="a" style="left:1635px;top:698px;font-size:11.4px;color:#333">False</div>
<div class="a" style="left:1369px;top:713px;width:21px;height:18px;background:#f0f0f0"></div><div class="a" style="left:1390px;top:713px;width:241px;height:18px;background:#fff;border-bottom:1px solid #f0f0f0"></div><div class="a" style="left:1632px;top:713px;width:287px;height:18px;background:#fff;border-bottom:1px solid #f0f0f0"></div><div class="a" style="left:1394px;top:716px;font-size:11.4px;color:#333">ShowMethodSignatures</div><div class="a" style="left:1635px;top:716px;font-size:11.4px;color:#333">False</div>
<div class="a" style="left:1369px;top:731px;width:21px;height:18px;background:#f0f0f0"></div><div class="a" style="left:1390px;top:731px;width:241px;height:18px;background:#fff;border-bottom:1px solid #f0f0f0"></div><div class="a" style="left:1632px;top:731px;width:287px;height:18px;background:#fff;border-bottom:1px solid #f0f0f0"></div><div class="a" style="left:1394px;top:734px;font-size:11.4px;color:#333">ShowVisibility</div><div class="a" style="left:1635px;top:734px;font-size:11.4px;color:#333">False</div>
<div class="a" style="left:1369px;top:749px;width:21px;height:18px;background:#f0f0f0"></div><div class="a" style="left:1390px;top:749px;width:241px;height:18px;background:#fff;border-bottom:1px solid #f0f0f0"></div><div class="a" style="left:1632px;top:749px;width:287px;height:18px;background:#fff;border-bottom:1px solid #f0f0f0"></div><div class="a" style="left:1394px;top:752px;font-size:11.4px;color:#333">SnapGridSize</div><div class="a" style="left:1635px;top:752px;font-size:11.4px;color:#333">8</div>
<div class="a" style="left:1369px;top:767px;width:21px;height:18px;background:#f0f0f0"></div><div class="a" style="left:1390px;top:767px;width:241px;height:18px;background:#fff;border-bottom:1px solid #f0f0f0"></div><div class="a" style="left:1632px;top:767px;width:287px;height:18px;background:#fff;border-bottom:1px solid #f0f0f0"></div><div class="a" style="left:1394px;top:770px;font-size:11.4px;color:#333">SquareNewAssociations</div><div class="a" style="left:1635px;top:770px;font-size:11.4px;color:#333">False</div>
<div class="a" style="left:1369px;top:785px;width:21px;height:18px;background:#f0f0f0"></div><div class="a" style="left:1390px;top:785px;width:241px;height:18px;background:#fff;border-bottom:1px solid #f0f0f0"></div><div class="a" style="left:1632px;top:785px;width:287px;height:18px;background:#fff;border-bottom:1px solid #f0f0f0"></div><div class="a" style="left:1394px;top:788px;font-size:11.4px;color:#333">SquareNewGeneralizations</div><div class="a" style="left:1635px;top:788px;font-size:11.4px;color:#333">False</div>
<div class="a" style="left:1369px;top:803px;width:550px;height:18px;background:#f0f0f0"></div><div class="a" style="left:1394px;top:806px;font-size:11.4px;font-weight:bold;color:#333">Misc</div>
<div class="a" style="left:1369px;top:821px;width:21px;height:18px;background:#f0f0f0"></div><div class="a" style="left:1390px;top:821px;width:241px;height:18px;background:#fff;border-bottom:1px solid #f0f0f0"></div><div class="a" style="left:1632px;top:821px;width:287px;height:18px;background:#fff;border-bottom:1px solid #f0f0f0"></div><div class="a" style="left:1394px;top:824px;font-size:11.4px;color:#333">Category</div>
<div class="a" style="left:1369px;top:839px;width:21px;height:18px;background:#f0f0f0"></div><div class="a" style="left:1390px;top:839px;width:241px;height:18px;background:#f0f0f0;border-bottom:1px solid #f0f0f0"></div><div class="a" style="left:1632px;top:839px;width:287px;height:18px;background:#fff;border-bottom:1px solid #f0f0f0"></div><div class="a" style="left:1394px;top:842px;font-size:11.4px;color:#333">Name</div><div class="a" style="left:1635px;top:842px;font-size:11.4px;color:#333">Diagram1</div>
<div class="a" style="left:1631px;top:641px;width:1px;height:162px;background:#f0f0f0"></div><div class="a" style="left:1631px;top:821px;width:1px;height:36px;background:#f0f0f0"></div><div class="a" style="left:1368px;top:1089px;width:551px;height:58px;background:#f0f0f0;border:1px solid #a0a0a0"></div><div class="a" style="left:1374px;top:1092px;font-size:11.4px;font-weight:bold;color:#333">Name</div><div class="a" style="left:1374px;top:1109px;font-size:11.4px;color:#333">diagram.name</div>

<div class="a" style="left:58px;top:140px;width:1325px;height:925px;background:#f0f0f0;border:1px solid #5a5a5a;box-shadow:0 2px 22px 2px rgba(0,0,0,0.32)"></div>
<div class="a" style="left:59px;top:141px;width:1323px;height:30px;background:#fff"></div>
<svg class="a" style="left:69px;top:150px" width="11" height="11"><rect x=".5" y=".5" width="9" height="9" fill="#f4f4f4" stroke="#c9c9c9"/><path d="M1,3 H9" stroke="#d5d5d5"/><rect x="2" y="4.5" width="3" height="3" fill="none" stroke="#f5b461" stroke-width=".9"/><path d="M6.5,4.5 H8 V8" stroke="#f5b461" stroke-width=".9" fill="none"/></svg>
<div class="a" style="left:88px;top:150.17px;font-size:11.8px;line-height:11.8px;color:#000">ViewModel Editor - Person</div>
<div class="a" style="left:1263px;top:155px;width:10px;height:1px;background:#000"></div>
<div class="a" style="left:1308px;top:150px;width:10px;height:10px;border:1px solid #000"></div>
<svg class="a" style="left:1353px;top:149px" width="12" height="12"><path d="M1,1 L11,11 M11,1 L1,11" stroke="#000" stroke-width="1.1"/></svg>
<div class="a" style="left:75px;top:183.19px;font-size:10.6px;line-height:10.6px;">ViewModel under edit:</div>
<div class="a" style="left:184px;top:178px;width:363px;height:21px;background:#fff;border:1px solid #7a7a7a"></div>
<div class="a" style="left:187px;top:183.19px;font-size:10.6px;line-height:10.6px;">Person : Person</div>
<svg class="a" style="left:533px;top:185px" width="10" height="7"><path d="M1,1 L5,5 L9,1" fill="none" stroke="#333" stroke-width="1.1"/></svg>
<div class="a" style="left:553px;top:181px;width:13px;height:13px;background:#fff;border:1px solid #333;"><svg width="11" height="11" viewBox="0 0 11 11" style="position:absolute;left:0;top:0"><path d="M1.8,5.5 L4.3,8.2 L9.4,2.2" fill="none" stroke="#000" stroke-width="1.5"/></svg></div>
<div class="a" style="left:571px;top:183.69px;font-size:10.6px;line-height:10.6px;">Categ</div>
<div class="a" style="left:608px;top:177px;width:97px;height:21px;background:#e1e1e1;border:1px solid #adadad;"><div style="position:absolute;left:0;right:0;top:0;bottom:0;display:flex;align-items:center;justify-content:center;font-size:10.6px;">Add ViewModel</div></div>
<div class="a" style="left:713px;top:177px;width:97px;height:21px;background:#e1e1e1;border:1px solid #adadad;"><div style="position:absolute;left:0;right:0;top:0;bottom:0;display:flex;align-items:center;justify-content:center;font-size:10.6px;">Action definitions</div></div>
<div class="a" style="left:818px;top:177px;width:97px;height:21px;background:#e1e1e1;border:1px solid #adadad;"><div style="position:absolute;left:0;right:0;top:0;bottom:0;display:flex;align-items:center;justify-content:center;font-size:10.6px;">New Editor</div></div>
<div class="a" style="left:923px;top:177px;width:97px;height:21px;background:#e1e1e1;border:1px solid #adadad;"><div style="position:absolute;left:0;right:0;top:0;bottom:0;display:flex;align-items:center;justify-content:center;font-size:10.6px;">Action CrossRef</div></div>
<div class="a" style="left:65px;top:221.23px;font-size:8.2px;line-height:8.2px;">Filter:</div>
<div class="a" style="left:87px;top:217px;width:249px;height:14px;background:#fff;border:1px solid #7a7a7a"></div>
<div class="a" style="left:341.5px;top:221.40px;font-size:8px;line-height:8px;color:#1a1aff">Index</div>
<div class="a" style="left:365px;top:221.40px;font-size:8px;line-height:8px;color:#1a1aff">PersonSeeker</div>
<div class="a" style="left:419.7px;top:221.40px;font-size:8px;line-height:8px;color:#1a1aff">AutoFormPerson</div>
<div class="a" style="left:484px;top:221.40px;font-size:8px;line-height:8px;color:#1a1aff">Person</div>
<div class="a" style="left:1334px;top:214px;width:37px;height:20px;background:#90ee90"></div>
<div class="a" style="left:1337px;top:216.53px;font-size:10.9px;line-height:10.9px;">UIFirst</div>
<div class="a" style="left:65px;top:234px;width:589px;height:649px;background:#fff;border:1px solid #828790;border-right:none"></div>
<div class="a" style="left:653px;top:234px;width:3px;height:804px;background:#a0a0a0"></div>
<div class="a" style="left:65px;top:882px;width:589px;height:4px;background:#a0a0a0"></div>
<div class="a" style="left:65px;top:886px;width:589px;height:152px;background:#fff;border:1px solid #a0a0a0;border-right:none"></div>
<svg class="a" style="left:72px;top:414px" width="8" height="8"><path d="M1,7 L7,7 L7,1 Z" fill="#444"/></svg>
<svg class="a" style="left:370px;top:415px" width="160" height="215"><path d="M132,8.6 H147.2 V206.4 H15" fill="none" stroke="#444" stroke-width="1.4"/><path d="M7.4,206.4 L15.6,201.5 L15.6,211.5 Z" fill="#111"/></svg>
<div class="a" style="left:92px;top:241px;width:416px;height:356px;background:#90ee90;border-radius:4px"></div>
<div class="a" style="left:97.5px;top:247.69px;font-size:15.9px;line-height:15.9px;">Person : Person&nbsp; (Requires Root</div>
<div class="a" style="left:328px;top:249px;width:14px;height:14px;background:#fff;border:1px solid #333;border-color:#555"><svg width="12" height="12" viewBox="0 0 11 11" style="position:absolute;left:0;top:0"><path d="M1.8,5.5 L4.3,8.2 L9.4,2.2" fill="none" stroke="#000" stroke-width="1.5"/></svg></div>
<div class="a" style="left:342px;top:247.69px;font-size:15.9px;line-height:15.9px;">)</div>
<div class="a" style="left:98px;top:265px;width:14px;height:14px;background:#fff;border:1px solid #333;border-color:#555"></div>
<div class="a" style="left:117px;top:269.40px;font-size:8px;line-height:8px;">Display sub column</div>
<div class="a" style="left:97.5px;top:280.12px;font-size:10.8px;line-height:10.8px;font-weight:bold;color:#333">CodeComment</div>
<div class="a" style="left:97.5px;top:293.19px;font-size:11.9px;line-height:11.9px;">&lt;Write a line on why this ViewModel exists&gt;</div>
<div class="a" style="left:97px;top:306px;width:99px;height:13px;background:#e1e1e1;border:1px solid #adadad;border-color:#6e6e6e;background:#e0e0e0"><div style="position:absolute;left:0;right:0;top:0;bottom:0;display:flex;align-items:center;justify-content:center;font-size:9px;">Add column from model</div></div>
<div class="a" style="left:103.5px;top:325.75px;width:4.0px;height:3.0px;background:#c8c8c8;border-radius:1px"></div><div class="a" style="left:103.5px;top:331.75px;width:4.0px;height:3.0px;background:#c8c8c8;border-radius:1px"></div><div class="a" style="left:108.5px;top:324.75px;width:9.0px;height:9.0px;background:#fff;border-radius:2px"></div><svg class="a" style="left:108.5px;top:324.75px" width="9" height="9"><path d="M2,7.5 L4.5,1.5 L7,7.5 M3,5.5 H6" fill="none" stroke="#f39a1e" stroke-width="1.2"/></svg><div class="a" style="left:118.5px;top:326.06px;font-size:11.05px;line-height:11.05px;">Name : self.Name</div>
<div class="a" style="left:103.5px;top:343.8px;width:4.0px;height:3.0px;background:#c8c8c8;border-radius:1px"></div><div class="a" style="left:103.5px;top:349.8px;width:4.0px;height:3.0px;background:#c8c8c8;border-radius:1px"></div><div class="a" style="left:108.5px;top:342.8px;width:9.0px;height:9.0px;background:#fff;border-radius:2px"></div><svg class="a" style="left:108.5px;top:342.8px" width="9" height="9"><circle cx="3.5" cy="3.5" r="2.2" fill="none" stroke="#f5a623" stroke-width="1" stroke-dasharray="1,.8"/><circle cx="6.3" cy="6.3" r="2" fill="none" stroke="#bbb" stroke-width=".9"/></svg><div class="a" style="left:118.5px;top:344.11px;font-size:11.05px;line-height:11.05px;">ShowMultiLink_CarsIUsedToOwn : ACTION: MultiLinkCarsIUsedToOwn</div>
<div class="a" style="left:103.5px;top:361.9px;width:4.0px;height:3.0px;background:#c8c8c8;border-radius:1px"></div><div class="a" style="left:103.5px;top:367.9px;width:4.0px;height:3.0px;background:#c8c8c8;border-radius:1px"></div><div class="a" style="left:108.5px;top:360.9px;width:9.0px;height:9.0px;background:#fff;border-radius:2px"></div><svg class="a" style="left:108.5px;top:360.9px" width="9" height="9"><path d="M2,7.5 L4.5,1.5 L7,7.5 M3,5.5 H6" fill="none" stroke="#f39a1e" stroke-width="1.2"/></svg><div class="a" style="left:118.5px;top:362.21px;font-size:11.05px;line-height:11.05px;">Age : self.Age</div>
<div class="a" style="left:103.5px;top:380.2px;width:4.0px;height:3.0px;background:#c8c8c8;border-radius:1px"></div><div class="a" style="left:103.5px;top:386.2px;width:4.0px;height:3.0px;background:#c8c8c8;border-radius:1px"></div><div class="a" style="left:108.5px;top:379.2px;width:9.0px;height:9.0px;background:#fff;border-radius:2px"></div><svg class="a" style="left:108.5px;top:379.2px" width="9" height="9"><path d="M2,7.5 L4.5,1.5 L7,7.5 M3,5.5 H6" fill="none" stroke="#f39a1e" stroke-width="1.2"/></svg><div class="a" style="left:118.5px;top:380.51px;font-size:11.05px;line-height:11.05px;">CamelCaseMeansWePutInSpaces :</div>
<div class="a" style="left:103.5px;top:398.5px;width:4.0px;height:3.0px;background:#c8c8c8;border-radius:1px"></div><div class="a" style="left:103.5px;top:404.5px;width:4.0px;height:3.0px;background:#c8c8c8;border-radius:1px"></div><div class="a" style="left:108.5px;top:397.5px;width:9.0px;height:9.0px;background:#fff;border-radius:2px"></div><svg class="a" style="left:108.5px;top:397.5px" width="9" height="9"><path d="M2,7.5 L4.5,1.5 L7,7.5 M3,5.5 H6" fill="none" stroke="#f39a1e" stroke-width="1.2"/></svg><div class="a" style="left:118.5px;top:398.81px;font-size:11.05px;line-height:11.05px;">NewColumn2 :</div>
<div class="a" style="left:103.5px;top:417px;width:4.0px;height:3px;background:#c8c8c8;border-radius:1px"></div><div class="a" style="left:103.5px;top:423px;width:4.0px;height:3px;background:#c8c8c8;border-radius:1px"></div><div class="a" style="left:108.5px;top:416px;width:9.0px;height:9px;background:#fff;border-radius:2px"></div><svg class="a" style="left:108.5px;top:416px" width="9" height="9"><path d="M2,7 L7,2 M4.5,2 H7 V4.5" fill="none" stroke="#f39a1e" stroke-width="1.1"/></svg><div class="a" style="left:118.5px;top:417.31px;font-size:11.05px;line-height:11.05px;">CarsIUsedToOwn : self.CarsIUsedToOwn</div>
<div class="a" style="left:100px;top:437px;width:71px;height:22px;background:#fff49f"></div>
<div class="a" style="left:103px;top:445.36px;font-size:10.4px;line-height:10.4px;font-weight:bold">Actions</div>
<svg class="a" style="left:145.3px;top:438.5px" width="20" height="20"><circle cx="10" cy="10" r="8.7" fill="#fff" stroke="#222" stroke-width="1.2"/><path d="M-3.5,-1.5 L0,2 L3.5,-1.5" transform="translate(10,10)" fill="none" stroke="#111" stroke-width="1.8"/></svg>
<div class="a" style="left:100px;top:459px;width:400px;height:105px;background:#fff49f"></div>
<div class="a" style="left:100.5px;top:460.77px;font-size:10.5px;line-height:10.5px;font-weight:bold">Actions leading here</div>
<div class="a" style="left:100.5px;top:472.5px;width:89.5px;height:13.0px;background:#e1e1e1;border:1px solid #adadad;border-color:#6e6e6e;background:#dcdcdc"><div style="position:absolute;left:0;right:0;top:0;bottom:0;display:flex;align-items:center;justify-content:center;font-size:9px;">Class Action for show</div></div>
<div class="a" style="left:190px;top:472.5px;width:94px;height:13.0px;background:#e1e1e1;border:1px solid #adadad;border-color:#6e6e6e;background:#dcdcdc"><div style="position:absolute;left:0;right:0;top:0;bottom:0;display:flex;align-items:center;justify-content:center;font-size:9px;">Global Action for show</div></div>
<div class="a" style="left:284px;top:472.5px;width:95px;height:13.0px;background:#e1e1e1;border:1px solid #adadad;border-color:#6e6e6e;background:#dcdcdc"><div style="position:absolute;left:0;right:0;top:0;bottom:0;display:flex;align-items:center;justify-content:center;font-size:9px;">Global Action + Create</div></div>
<div class="a" style="left:100.5px;top:486.91px;font-size:11.05px;line-height:11.05px;color:#1a1aff;text-decoration:underline">CL:Person /ShowPersonIAmInControl</div>
<div class="a" style="left:100.5px;top:508.5px;width:53.0px;height:18.0px;background:#e1e1e1;border:1px solid #adadad;border-color:#6e6e6e;background:#dcdcdc"><div style="position:absolute;left:0;right:0;top:0;bottom:0;display:flex;align-items:center;justify-content:center;font-size:9px;">Class Action</div></div>
<div class="a" style="left:153.5px;top:508.5px;width:76.5px;height:18.0px;background:#e1e1e1;border:1px solid #adadad;border-color:#6e6e6e;background:#dcdcdc"><div style="position:absolute;left:0;right:0;top:0;bottom:0;display:flex;align-items:center;justify-content:center;font-size:9px;">ViewModel Action</div></div>
<svg class="a" style="left:270px;top:509.79999999999995px" width="20" height="20"><circle cx="10" cy="10" r="8.7" fill="#fff" stroke="#222" stroke-width="1.2"/><path d="M-3.5,1.8 L0,-1.7 L3.5,1.8" transform="translate(10,10)" fill="none" stroke="#111" stroke-width="1.8"/></svg>
<div class="a" style="left:293.5px;top:515.89px;font-size:10.95px;line-height:10.95px;">2 optouts</div>
<div class="a" style="left:104px;top:526px;width:62px;height:13.5px;background:linear-gradient(90deg,#cfc27a,#e9dc8c 30%,#efe29a)"></div>
<div class="a" style="left:100px;top:522.5px;width:70px;height:20.5px;border:3.5px solid #12aee9;border-radius:6px"></div>
<div class="a" style="left:109.4px;top:527.81px;font-size:11.05px;line-height:11.05px;color:#1a1aff;text-decoration:underline">DeleteThis</div>
<div class="a" style="left:109.4px;top:544.31px;font-size:11.05px;line-height:11.05px;color:#1a1aff;text-decoration:underline">ShowPerson</div>
<div class="a" style="left:171.3px;top:543.5px;width:13.199999999999989px;height:19.5px;background:#dcdcdc;border:1px solid #6e6e6e"></div><div class="a" style="left:173.3px;top:546.5px;width:9.199999999999989px;height:12.5px;background:#fff;border-radius:3px"></div><svg class="a" style="left:174.9px;top:550.25px" width="6" height="6"><rect x=".5" y=".5" width="5" height="5" fill="none" stroke="#f5b461" stroke-width=".8"/></svg>
<div class="a" style="left:185.3px;top:543.5px;width:38.19999999999999px;height:19.5px;background:#e1e1e1;border:1px solid #adadad;border-color:#6e6e6e;background:#dcdcdc"><div style="position:absolute;left:0;right:0;top:0;bottom:0;display:flex;align-items:center;justify-content:center;font-size:10.9px;padding-top:4px">opt-out</div></div>
<div class="a" style="left:227px;top:548.39px;font-size:10.95px;line-height:10.95px;">(Person)</div>
<div class="a" style="left:282.5px;top:530.3px;width:30.5px;height:16.0px;background:#e1e1e1;border:1px solid #adadad;border-color:#6e6e6e;background:#dcdcdc"><div style="position:absolute;left:0;right:0;top:0;bottom:0;display:flex;align-items:center;justify-content:center;font-size:10.9px;padding-top:3px">opt-in</div></div>
<div class="a" style="left:282.5px;top:547.5px;width:30.5px;height:15.5px;background:#e1e1e1;border:1px solid #adadad;border-color:#6e6e6e;background:#dcdcdc"><div style="position:absolute;left:0;right:0;top:0;bottom:0;display:flex;align-items:center;justify-content:center;font-size:10.9px;padding-top:3px">opt-in</div></div>
<div class="a" style="left:313.5px;top:531.31px;font-size:11.05px;line-height:11.05px;color:#1a1aff;text-decoration:underline">MultiLinkCarsIUsedToOwn</div>
<div class="a" style="left:313.5px;top:548.81px;font-size:11.05px;line-height:11.05px;color:#1a1aff;text-decoration:underline">ShowPersonIAmInControl</div>
<div class="a" style="left:440px;top:547.2px;width:13.699999999999989px;height:15.199999999999932px;background:#dcdcdc;border:1px solid #6e6e6e"></div><div class="a" style="left:442px;top:550.2px;width:9.699999999999989px;height:8.199999999999932px;background:#fff;border-radius:3px"></div><svg class="a" style="left:443.85px;top:551.8px" width="6" height="6"><rect x=".5" y=".5" width="5" height="5" fill="none" stroke="#f5b461" stroke-width=".8"/></svg>
<div class="a" style="left:457px;top:548.89px;font-size:10.95px;line-height:10.95px;">(Person)</div>
<div class="a" style="left:100px;top:570px;width:159px;height:23px;background:#2ecfbf"></div>
<div class="a" style="left:103px;top:577.82px;font-size:10.8px;line-height:10.8px;font-weight:bold">Variables and Validations</div>
<svg class="a" style="left:233.8px;top:571.5px" width="20" height="20"><circle cx="10" cy="10" r="8.7" fill="#fff" stroke="#222" stroke-width="1.2"/><path d="M-3.5,-1.5 L0,2 L3.5,-1.5" transform="translate(10,10)" fill="none" stroke="#111" stroke-width="1.8"/></svg>
<div class="a" style="left:111px;top:607px;width:262px;height:145px;background:#add8e6;border-radius:4px"></div>
<div class="a" style="left:116.5px;top:613.97px;font-size:15.8px;line-height:15.8px;">Car : Car</div>
<div class="a" style="left:116.4px;top:630.3px;width:98.29999999999998px;height:13.200000000000045px;background:#e1e1e1;border:1px solid #adadad;border-color:#6e6e6e;background:#e0e0e0"><div style="position:absolute;left:0;right:0;top:0;bottom:0;display:flex;align-items:center;justify-content:center;font-size:9px;">Add column from model</div></div>
<div class="a" style="left:122.4px;top:650.8px;width:4.0px;height:3.0px;background:#c8c8c8;border-radius:1px"></div><div class="a" style="left:122.4px;top:656.8px;width:4.0px;height:3.0px;background:#c8c8c8;border-radius:1px"></div><div class="a" style="left:127.4px;top:649.8px;width:9.0px;height:9.0px;background:#fff;border-radius:2px"></div><svg class="a" style="left:127.4px;top:649.8px" width="9" height="9"><path d="M2,7.5 L4.5,1.5 L7,7.5 M3,5.5 H6" fill="none" stroke="#f39a1e" stroke-width="1.2"/></svg><div class="a" style="left:137.4px;top:651.11px;font-size:11.05px;line-height:11.05px;">asString : self.asString</div>
<div class="a" style="left:122.4px;top:668.3px;width:4.0px;height:3.0px;background:#c8c8c8;border-radius:1px"></div><div class="a" style="left:122.4px;top:674.3px;width:4.0px;height:3.0px;background:#c8c8c8;border-radius:1px"></div><div class="a" style="left:127.4px;top:667.3px;width:9.0px;height:9.0px;background:#fff;border-radius:2px"></div><svg class="a" style="left:127.4px;top:667.3px" width="9" height="9"><path d="M2,7.5 L4.5,1.5 L7,7.5 M3,5.5 H6" fill="none" stroke="#f39a1e" stroke-width="1.2"/></svg><div class="a" style="left:137.4px;top:668.61px;font-size:11.05px;line-height:11.05px;">RegistrationNumber : self.RegistrationNumber</div>
<div class="a" style="left:122px;top:668px;width:5px;height:3px;background:#f0f000"></div>
<div class="a" style="left:119px;top:688.2px;width:246px;height:55.39999999999998px;background:#fff49f"></div>
<div class="a" style="left:119px;top:688.2px;width:53.599999999999994px;height:13.299999999999955px;background:#e1e1e1;border:1px solid #adadad;border-color:#6e6e6e;background:#dcdcdc"><div style="position:absolute;left:0;right:0;top:0;bottom:0;display:flex;align-items:center;justify-content:center;font-size:9px;">Class Action</div></div>
<div class="a" style="left:172.6px;top:688.2px;width:76.1px;height:13.299999999999955px;background:#e1e1e1;border:1px solid #adadad;border-color:#6e6e6e;background:#dcdcdc"><div style="position:absolute;left:0;right:0;top:0;bottom:0;display:flex;align-items:center;justify-content:center;font-size:9px;">ViewModel Action</div></div>
<div class="a" style="left:125.4px;top:704.86px;font-size:10.4px;line-height:10.4px;font-weight:bold">AutoForms</div>
<div class="a" style="left:128.3px;top:716.01px;font-size:11.05px;line-height:11.05px;color:#1a1aff;text-decoration:underline">ShowCar</div>
<div class="a" style="left:173.4px;top:715.5px;width:12.599999999999994px;height:14.5px;background:#dcdcdc;border:1px solid #6e6e6e"></div><div class="a" style="left:175.4px;top:718.5px;width:8.599999999999994px;height:7.5px;background:#fff;border-radius:3px"></div><svg class="a" style="left:176.7px;top:719.75px" width="6" height="6"><rect x=".5" y=".5" width="5" height="5" fill="none" stroke="#f5b461" stroke-width=".8"/></svg>
<div class="a" style="left:186.5px;top:715.5px;width:38.5px;height:14.5px;background:#e1e1e1;border:1px solid #adadad;border-color:#6e6e6e;background:#dcdcdc"><div style="position:absolute;left:0;right:0;top:0;bottom:0;display:flex;align-items:center;justify-content:center;font-size:10.9px;padding-top:3px">opt-out</div></div>
<div class="a" style="left:228.7px;top:716.09px;font-size:10.95px;line-height:10.95px;">(Car)</div>
<div class="a" style="left:128.3px;top:732.51px;font-size:11.05px;line-height:11.05px;color:#1a1aff;text-decoration:underline">MultiLinkCarsIUsedToOwn</div>
<div class="a" style="left:661.4px;top:241.74px;font-size:10.9px;line-height:10.9px;">Use placing hints:</div>
<div class="a" style="left:772px;top:240px;width:13px;height:13px;background:#fff;border:1px solid #333;"><svg width="11" height="11" viewBox="0 0 11 11" style="position:absolute;left:0;top:0"><path d="M1.8,5.5 L4.3,8.2 L9.4,2.2" fill="none" stroke="#000" stroke-width="1.5"/></svg></div>
<div class="a" style="left:661.4px;top:257.13px;font-size:10.9px;line-height:10.9px;">CodeGen :</div>
<div class="a" style="left:772px;top:256px;width:13px;height:13px;background:#fff;border:1px solid #333;"></div>
<div class="a" style="left:1292px;top:240px;width:13px;height:13px;background:#fff;border:1px solid #333;"><svg width="11" height="11" viewBox="0 0 11 11" style="position:absolute;left:0;top:0"><path d="M1.8,5.5 L4.3,8.2 L9.4,2.2" fill="none" stroke="#000" stroke-width="1.5"/></svg></div>
<div class="a" style="left:1310px;top:239.48px;font-size:10.85px;line-height:10.85px;">Label on top</div>
<div class="a" style="left:1190px;top:254px;width:76px;height:16px;background:#e1e1e1;border:1px solid #adadad;border-color:#6e6e6e"><div style="position:absolute;left:0;right:0;top:0;bottom:0;display:flex;align-items:center;justify-content:center;font-size:10.9px;">Tagged values</div></div>
<div class="a" style="left:1266px;top:254px;width:105px;height:16px;background:#e1e1e1;border:1px solid #adadad;border-color:#6e6e6e"><div style="position:absolute;left:0;right:0;top:0;bottom:0;display:flex;align-items:center;justify-content:center;font-size:10.9px;">Analyze expressions</div></div>
<div class="a" style="left:656px;top:276px;width:720px;height:17px;background:#90ee90;border-top:1px solid #b4b4b4;border-bottom:1px solid #b4b4b4"></div>
<div class="a" style="left:660px;top:277.38px;font-size:13.9px;line-height:13.9px;">The Root level of the ViewModel</div>
<svg class="a" style="left:657.5px;top:294.7px" width="20" height="20"><circle cx="10" cy="10" r="8.7" fill="#fff" stroke="#222" stroke-width="1.2"/><path d="M-3.5,1.8 L0,-1.7 L3.5,1.8" transform="translate(10,10)" fill="none" stroke="#111" stroke-width="1.8"/></svg>
<div class="a" style="left:681.2px;top:300.24px;font-size:10.9px;line-height:10.9px;">Properties</div>
<div class="a" style="left:662px;top:322.94px;font-size:10.9px;line-height:10.9px;">Name:</div>
<div class="a" style="left:772.6px;top:320px;width:597.4px;height:15px;background:#fff;border:1px solid #7a7a7a;"></div>
<div class="a" style="left:776px;top:323.02px;font-size:10.8px;line-height:10.8px;">Person</div>
<div class="a" style="left:662px;top:338.94px;font-size:10.9px;line-height:10.9px;">Class:</div>
<div class="a" style="left:772.6px;top:335.5px;width:128.89999999999998px;height:17.0px;background:linear-gradient(#f0f0f0,#e5e5e5);border:1px solid #acacac"></div><div class="a" style="left:777.6px;top:339.41px;font-size:10.8px;line-height:10.8px;">Person</div><svg class="a" style="left:887.5px;top:341.0px" width="9" height="6"><path d="M1,1 L4.5,4.5 L8,1" fill="none" stroke="#444" stroke-width="1.1"/></svg>
<div class="a" style="left:902px;top:335.3px;width:20px;height:17.19999999999999px;background:#e1e1e1;border:1px solid #adadad;border-color:#6e6e6e"><div style="position:absolute;left:0;right:0;top:0;bottom:0;display:flex;align-items:center;justify-content:center;font-size:10px;padding-top:5px">...</div></div>
<div class="a" style="left:1224.8px;top:339.04px;font-size:10.9px;line-height:10.9px;">DuckType:</div>
<div class="a" style="left:1280.3px;top:335.3px;width:69.70000000000005px;height:17.19999999999999px;background:linear-gradient(#f0f0f0,#e5e5e5);border:1px solid #acacac"></div><svg class="a" style="left:1336px;top:340.9px" width="9" height="6"><path d="M1,1 L4.5,4.5 L8,1" fill="none" stroke="#444" stroke-width="1.1"/></svg>
<div class="a" style="left:1350px;top:335.3px;width:20px;height:17.19999999999999px;background:#e1e1e1;border:1px solid #adadad;border-color:#6e6e6e"><div style="position:absolute;left:0;right:0;top:0;bottom:0;display:flex;align-items:center;justify-content:center;font-size:10px;padding-top:5px">...</div></div>
<div class="a" style="left:662px;top:356.24px;font-size:10.9px;line-height:10.9px;">Column Count:</div>
<div class="a" style="left:772.6px;top:353.4px;width:74.39999999999998px;height:14.600000000000023px;background:#fff;border:1px solid #7a7a7a;"></div>
<div class="a" style="left:776px;top:355.52px;font-size:10.8px;line-height:10.8px;">10</div>
<div class="a" style="left:852.2px;top:356.24px;font-size:10.9px;line-height:10.9px;">Column Width:</div>
<div class="a" style="left:952.3px;top:353.3px;width:74.70000000000005px;height:14.199999999999989px;background:#fff;border:1px solid #7a7a7a;"></div>
<div class="a" style="left:956px;top:355.52px;font-size:10.8px;line-height:10.8px;">50</div>
<div class="a" style="left:1033px;top:354.3px;width:13px;height:13px;background:#fff;border:1px solid #333;"></div>
<div class="a" style="left:1052.2px;top:353.44px;font-size:10.9px;line-height:10.9px;">Hide Menubar</div>
<div class="a" style="left:662px;top:370.94px;font-size:10.9px;line-height:10.9px;">Row Count:</div>
<div class="a" style="left:772.6px;top:368.4px;width:74.39999999999998px;height:14.600000000000023px;background:#fff;border:1px solid #7a7a7a;"></div>
<div class="a" style="left:776px;top:371.02px;font-size:10.8px;line-height:10.8px;">3</div>
<div class="a" style="left:852.2px;top:370.94px;font-size:10.9px;line-height:10.9px;">Row Height:</div>
<div class="a" style="left:952.3px;top:368.9px;width:74.70000000000005px;height:14.100000000000023px;background:#fff;border:1px solid #7a7a7a;"></div>
<div class="a" style="left:956px;top:371.02px;font-size:10.8px;line-height:10.8px;">20</div>
<div class="a" style="left:1033px;top:369.6px;width:13px;height:13px;background:#fff;border:1px solid #333;"></div>
<div class="a" style="left:1052.2px;top:369.04px;font-size:10.9px;line-height:10.9px;">Hide Sidebar</div>
<div class="a" style="left:1122px;top:369.5px;width:13px;height:13px;background:#fff;border:1px solid #333;"></div>
<div class="a" style="left:1140.7px;top:368.94px;font-size:10.9px;line-height:10.9px;">Savebar (Save/Cancel in Menu)</div>
<div class="a" style="left:662px;top:388.44px;font-size:10.9px;line-height:10.9px;">Taborder:</div>
<div class="a" style="left:772.6px;top:383.5px;width:597.4px;height:18.0px;background:linear-gradient(#f0f0f0,#e5e5e5);border:1px solid #acacac"></div><div class="a" style="left:777.6px;top:387.86px;font-size:10.9px;line-height:10.9px;">DisplayOrderYBeforeX</div><svg class="a" style="left:1356px;top:389.5px" width="9" height="6"><path d="M1,1 L4.5,4.5 L8,1" fill="none" stroke="#444" stroke-width="1.1"/></svg>
<svg class="a" style="left:663.5px;top:402.7px" width="20" height="20"><circle cx="10" cy="10" r="8.7" fill="#fff" stroke="#222" stroke-width="1.2"/><path d="M-3.5,-1.5 L0,2 L3.5,-1.5" transform="translate(10,10)" fill="none" stroke="#111" stroke-width="1.8"/></svg>
<div class="a" style="left:687px;top:408.24px;font-size:10.9px;line-height:10.9px;">Constraints</div>
<div class="a" style="left:661.6px;top:427.94px;font-size:10.9px;line-height:10.9px;">Readonly Expression:</div>
<div class="a" style="left:772.6px;top:425.4px;width:578.4px;height:15.600000000000023px;background:#fff;border:1px solid #7a7a7a;"></div>
<div class="a" style="left:1350px;top:425.4px;width:20px;height:15.600000000000023px;background:#e1e1e1;border:1px solid #adadad;border-color:#6e6e6e"><div style="position:absolute;left:0;right:0;top:0;bottom:0;display:flex;align-items:center;justify-content:center;font-size:10px;padding-top:5px">...</div></div>
<div class="a" style="left:661.6px;top:444.44px;font-size:10.9px;line-height:10.9px;">Access Expression:</div>
<div class="a" style="left:772.6px;top:441.3px;width:578.4px;height:16.19999999999999px;background:#fff;border:1px solid #7a7a7a;"></div>
<div class="a" style="left:1350px;top:441.3px;width:20px;height:16.19999999999999px;background:#e1e1e1;border:1px solid #adadad;border-color:#6e6e6e"><div style="position:absolute;left:0;right:0;top:0;bottom:0;display:flex;align-items:center;justify-content:center;font-size:10px;padding-top:5px">...</div></div>
<div class="a" style="left:661.6px;top:460.74px;font-size:10.9px;line-height:10.9px;">Access Groups:</div>
<div class="a" style="left:1350px;top:458.4px;width:20px;height:15.600000000000023px;background:#e1e1e1;border:1px solid #adadad;border-color:#6e6e6e"><div style="position:absolute;left:0;right:0;top:0;bottom:0;display:flex;align-items:center;justify-content:center;font-size:10px;padding-top:5px">...</div></div>
<div class="a" style="left:661.6px;top:477.24px;font-size:10.9px;line-height:10.9px;">Requires root object:</div>
<div class="a" style="left:773.4px;top:475.8px;width:13px;height:13px;background:#fff;border:1px solid #333;"><svg width="11" height="11" viewBox="0 0 11 11" style="position:absolute;left:0;top:0"><path d="M1.8,5.5 L4.3,8.2 L9.4,2.2" fill="none" stroke="#000" stroke-width="1.5"/></svg></div>
<div class="a" style="left:661.6px;top:490.74px;font-size:10.9px;line-height:10.9px;">Act As For Actions:</div>
<div class="a" style="left:772.6px;top:489.5px;width:578.4px;height:16.0px;background:#fff;border:1px solid #7a7a7a;"></div>
<div class="a" style="left:1350px;top:489.5px;width:20px;height:16.0px;background:#e1e1e1;border:1px solid #adadad;border-color:#6e6e6e"><div style="position:absolute;left:0;right:0;top:0;bottom:0;display:flex;align-items:center;justify-content:center;font-size:10px;padding-top:5px">...</div></div>
<div class="a" style="left:1339px;top:512px;width:35px;height:350px;background:#dcdcdc;border-left:1px solid #cfcfcf;border-right:1px solid #cfcfcf"></div>
<div class="a" style="left:1339px;top:547px;width:35px;height:1px;background:#c4c4c4"></div>
<div class="a" style="left:1339px;top:582px;width:35px;height:1px;background:#c4c4c4"></div>
<div class="a" style="left:1339px;top:617px;width:35px;height:1px;background:#c4c4c4"></div>
<div class="a" style="left:1339px;top:652px;width:35px;height:1px;background:#c4c4c4"></div>
<div class="a" style="left:1339px;top:687px;width:35px;height:1px;background:#c4c4c4"></div>
<div class="a" style="left:1339px;top:722px;width:35px;height:1px;background:#c4c4c4"></div>
<div class="a" style="left:1339px;top:757px;width:35px;height:1px;background:#c4c4c4"></div>
<div class="a" style="left:1339px;top:792px;width:35px;height:1px;background:#c4c4c4"></div>
<div class="a" style="left:1339px;top:827px;width:35px;height:1px;background:#c4c4c4"></div>
<svg class="a" style="left:1346px;top:519px" width="24" height="24"><rect x="3" y="5.8" width="15" height="12.6" fill="none" stroke="#111" stroke-width="2"/><path d="M5.8,16.2 L6.9,11.9 L16.6,2.2 Q18.3,1 19.7,2.3 Q21,3.7 19.8,5.4 L10.1,15.1 Z" fill="#111" stroke="#dcdcdc" stroke-width="1.1"/><path d="M7.2,14.8 L8,12.6 L9.4,14 Z" fill="#dcdcdc"/></svg>
<svg class="a" style="left:1346px;top:554px" width="24" height="24"><path d="M3.5,3.2 H18.5 V8 H17.2 Q16.8,5.6 14.5,5.6 H12.3 V17 Q12.3,17.8 14,17.8 V20 H8 V17.8 Q9.7,17.8 9.7,17 V5.6 H7.5 Q5.2,5.6 4.8,8 H3.5 Z" fill="#111"/></svg>
<svg class="a" style="left:1346px;top:589px" width="24" height="24"><rect x="5" y="7.5" width="10" height="9.5" fill="none" stroke="#111" stroke-width="1.8"/><path d="M7,11.5 L10,14.3 L16.5,7" fill="none" stroke="#111" stroke-width="2.2"/></svg>
<svg class="a" style="left:1346px;top:624px" width="24" height="24"><path d="M0.5,5.5 H13 M0.5,10 H13 M0.5,14.5 H11" stroke="#111" stroke-width="2.6"/><path d="M0.5,4.2 V16.3" stroke="#111" stroke-width="1.4"/><path d="M17.5,7.5 V15.5 M14.5,12.8 L17.5,16.2 L20.5,12.8" fill="none" stroke="#111" stroke-width="2"/></svg>
<svg class="a" style="left:1346px;top:659px" width="24" height="24"><rect x="2" y="4.5" width="16" height="14" rx="1" fill="#111"/><path d="M3.5,9 H16.5 V17 H3.5 Z" fill="#ddd"/><path d="M3.5,11.5 H16.5 M3.5,14.3 H16.5 M6.8,9 V17 M10,9 V17 M13.2,9 V17" stroke="#111" stroke-width="1.1"/><rect x="4.5" y="2" width="2.2" height="4.5" rx="1" fill="#111"/><rect x="13.3" y="2" width="2.2" height="4.5" rx="1" fill="#111"/></svg>
<svg class="a" style="left:1346px;top:694px" width="24" height="24"><rect x="2" y="3.5" width="16" height="13.5" fill="none" stroke="#111" stroke-width="2"/><path d="M7.2,9.3 L7.8,6.5 L9,7.6 L10,6 L11,7.6 L12.2,6.5 L12.8,9.3 Q12.5,11 10,11 Q7.5,11 7.2,9.3 Z M6,10.5 Q8.5,11 9.5,15.5 Q6.5,15 6,10.5 Z M14,10.5 Q11.5,11 10.5,15.5 Q13.5,15 14,10.5 Z" fill="#111"/></svg>
<svg class="a" style="left:1346px;top:729px" width="24" height="24"><rect x="1.5" y="5.8" width="17.5" height="9.5" rx="2.8" fill="none" stroke="#111" stroke-width="1.9"/><text x="10.3" y="13.3" font-family="Liberation Sans" font-size="7" font-weight="bold" text-anchor="middle" fill="#111">btn</text></svg>
<svg class="a" style="left:1346px;top:764px" width="24" height="24"><rect x="2" y="2" width="16" height="15" fill="none" stroke="#111" stroke-width="1.6"/><text x="3.5" y="8.5" font-family="Liberation Sans" font-size="6.5" font-weight="bold" fill="#111">list</text><path d="M2,11.3 H18 M2,13.6 H18" stroke="#222" stroke-width="1.3"/><path d="M2,12.5 H18 M2,14.8 H18" stroke="#999" stroke-width="1"/></svg>
<svg class="a" style="left:1346px;top:799px" width="24" height="24"><path d="M10,3 L16,6.5 V14 L10,17.5 L4,14 V6.5 Z" fill="#888"/><path d="M10,3 L16,6.5 L10,10 L4,6.5 Z" fill="#111"/><path d="M10,10 V17.5 L4,14 V6.5 Z" fill="#555"/><path d="M2.8,5 Q1,10 2.8,16 M17.2,5 Q19,10 17.2,16" fill="none" stroke="#111" stroke-width="1.5"/></svg>
<svg class="a" style="left:1346px;top:834px" width="24" height="24"><rect x="1" y="1" width="20" height="13" fill="#fff" stroke="#111" stroke-width="1.5"/><path d="M1,4 H21" stroke="#111" stroke-width="1.1"/><path d="M3.5,2.5 H9 M14,2.5 H15 M16.5,2.5 H17.5 M19,2.5 H19.8" stroke="#111" stroke-width="1.2"/><rect x="5" y="7.5" width="12" height="14.5" rx="1.5" fill="#fff" stroke="#111" stroke-width="1.6"/><ellipse cx="11" cy="15" rx="4" ry="2.3" fill="none" stroke="#111" stroke-width="1.2"/><circle cx="11" cy="15" r="1" fill="#111"/><path d="M7,10 H8.3 M13.7,10 H15 M7,20 H8.3 M13.7,20 H15" stroke="#111" stroke-width=".9"/></svg>
<div class="a" style="left:726px;top:644px;width:540px;height:221px;background:#e6e6e6"></div>
<div class="a" style="left:726px;top:644px;width:530px;height:211px;background:#d3d3d3"></div>
<div class="a" style="left:777.6px;top:855px;width:1.0px;height:10px;background:#dcdcdc"></div>
<div class="a" style="left:828.3000000000001px;top:855px;width:1.0px;height:10px;background:#dcdcdc"></div>
<div class="a" style="left:879.0px;top:855px;width:1.0px;height:10px;background:#dcdcdc"></div>
<div class="a" style="left:929.7px;top:855px;width:1.0px;height:10px;background:#dcdcdc"></div>
<div class="a" style="left:980.4000000000001px;top:855px;width:1.0px;height:10px;background:#dcdcdc"></div>
<div class="a" style="left:1031.1px;top:855px;width:1.0px;height:10px;background:#dcdcdc"></div>
<div class="a" style="left:1081.8000000000002px;top:855px;width:1.0px;height:10px;background:#dcdcdc"></div>
<div class="a" style="left:1132.5px;top:855px;width:1.0px;height:10px;background:#dcdcdc"></div>
<div class="a" style="left:1183.2px;top:855px;width:1.0px;height:10px;background:#dcdcdc"></div>
<div class="a" style="left:1233.9px;top:855px;width:1.0px;height:10px;background:#dcdcdc"></div>
<div class="a" style="left:726px;top:644px;width:530px;height:3px;background:#c9c9c9"></div>
<div class="a" style="left:726.5px;top:647.4px;width:250.10000000000002px;height:30.200000000000045px;background:#fff;border:1px solid #e0e0e0;box-shadow:0 1px 1px #888"></div><div class="a" style="left:731px;top:650.60px;font-size:10px;line-height:10px;color:#a0a0a0">Name</div>
<div class="a" style="left:726.5px;top:682.3px;width:199.79999999999995px;height:25.700000000000045px;background:#fff;border:1px solid #e0e0e0;box-shadow:0 1px 1px #888"></div><div class="a" style="left:731px;top:685.50px;font-size:10px;line-height:10px;color:#a0a0a0">Age (Years)</div>
<div class="a" style="left:726.5px;top:713px;width:199.79999999999995px;height:25.700000000000045px;background:#fff;border:1px solid #e0e0e0;box-shadow:0 1px 1px #888"></div><div class="a" style="left:731px;top:716.20px;font-size:10px;line-height:10px;color:#a0a0a0">I am in control</div>
<div class="a" style="left:726.5px;top:743.9px;width:199.79999999999995px;height:26.100000000000023px;background:#fff;border:1px solid #e0e0e0;box-shadow:0 1px 1px #888"></div><div class="a" style="left:731px;top:747.10px;font-size:10px;line-height:10px;color:#a0a0a0">New Column2</div>
<div class="a" style="left:736.5px;top:776.02px;font-size:16.1px;line-height:16.1px;">Cars I Used To Own</div>
<div class="a" style="left:726.5px;top:795.8px;width:150.0px;height:58.200000000000045px;background:#fff;border:1px solid #c8c8c8;border-radius:4px"></div>
<div class="a" style="left:727px;top:820px;width:149px;height:1px;background:#b0b0b0"></div>
<div class="a" style="left:731px;top:798.70px;font-size:10px;line-height:10px;color:#555">as</div>
<div class="a" style="left:731px;top:810.70px;font-size:10px;line-height:10px;color:#555">Strinc</div>
<div class="a" style="left:776px;top:798.70px;font-size:10px;line-height:10px;color:#555">Regis</div>
<div class="a" style="left:776px;top:810.70px;font-size:10px;line-height:10px;color:#555">Numt</div>
<svg class="a" style="left:852px;top:799px" width="20" height="8"><circle cx="3" cy="4" r="2.1" fill="#2f62a8"/><circle cx="9" cy="4" r="2.1" fill="#2f62a8"/><circle cx="15" cy="4" r="2.1" fill="#2f62a8"/></svg>
<div class="a" style="left:1033px;top:646.2px;width:170px;height:31.799999999999955px;background:#3567ae;border-radius:3px;box-shadow:0 1px 2px rgba(0,0,0,.35)"></div>
<div class="a" style="left:1048.5px;top:655.92px;font-size:14.1px;line-height:14.1px;color:#fff">Cars I Used To Own...</div>
<div class="a" style="left:657.5px;top:1002px;width:14px;height:14px;background:#fff;border:1px solid #333;border-color:#555"></div>
<div class="a" style="left:675.8px;top:1001.44px;font-size:10.9px;line-height:10.9px;">Show grid lines</div>
<div class="a" style="left:754.2px;top:1002px;width:14px;height:14px;background:#fff;border:1px solid #333;border-color:#555"></div>
<div class="a" style="left:773.3px;top:1001.44px;font-size:10.9px;line-height:10.9px;">Show tab-order</div>
<div class="a" style="left:851.3px;top:997px;width:16.700000000000045px;height:23px;background:#e1e1e1;border:1px solid #adadad;border-color:#6e6e6e;background:#dcdcdc"><div style="position:absolute;left:0;right:0;top:0;bottom:0;display:flex;align-items:center;justify-content:center;font-size:11.5px;">Fit</div></div>
<div class="a" style="left:655.8px;top:1025.64px;font-size:7.95px;line-height:7.95px;">Screen size marker</div>
<div class="a" style="left:725.3px;top:1023px;width:18.700000000000045px;height:12px;background:#fff;border:1px solid #7a7a7a;border-color:#c8c8c8"></div>
<div class="a" style="left:727px;top:1025.60px;font-size:8px;line-height:8px;">758</div>
<div class="a" style="left:744px;top:1025.60px;font-size:8px;line-height:8px;">X</div>
<div class="a" style="left:749px;top:1023px;width:20px;height:12px;background:#fff;border:1px solid #7a7a7a;border-color:#c8c8c8"></div>
<div class="a" style="left:751px;top:1025.60px;font-size:8px;line-height:8px;">600</div>
<div class="a" style="left:769px;top:1025.64px;font-size:7.95px;line-height:7.95px;">SuggestedZoom</div>
<div class="a" style="left:827.5px;top:1023px;width:29.5px;height:12px;background:#fff;border:1px solid #7a7a7a;border-color:#c8c8c8"></div>
<div class="a" style="left:857.5px;top:1020px;width:78.5px;height:18px;background:#e1e1e1;border:1px solid #adadad;border-color:#6e6e6e;background:#dcdcdc"><div style="position:absolute;left:0;right:0;top:0;bottom:0;display:flex;align-items:center;justify-content:center;font-size:7.95px;">Set shrink zoom to fit</div></div>
<div class="a" style="left:946.3px;top:1020.5px;width:148.20000000000005px;height:17.0px;background:#e1e1e1;border:1px solid #adadad;border-color:#6e6e6e;background:#dcdcdc"><div style="position:absolute;left:0;right:0;top:0;bottom:0;display:flex;align-items:center;justify-content:center;font-size:10.94px;">WebApp Prototype Edit-Mode</div></div>
<svg class="a" style="left:0;top:500px;filter:drop-shadow(2px 3px 3px rgba(0,0,0,.35))" width="130" height="170"><path d="M27.6,148.6 L85,57.5 L79,55 L103,42 L97.5,69.5 L92.5,64 Z" fill="#10aee8"/></svg>
</body></html>
